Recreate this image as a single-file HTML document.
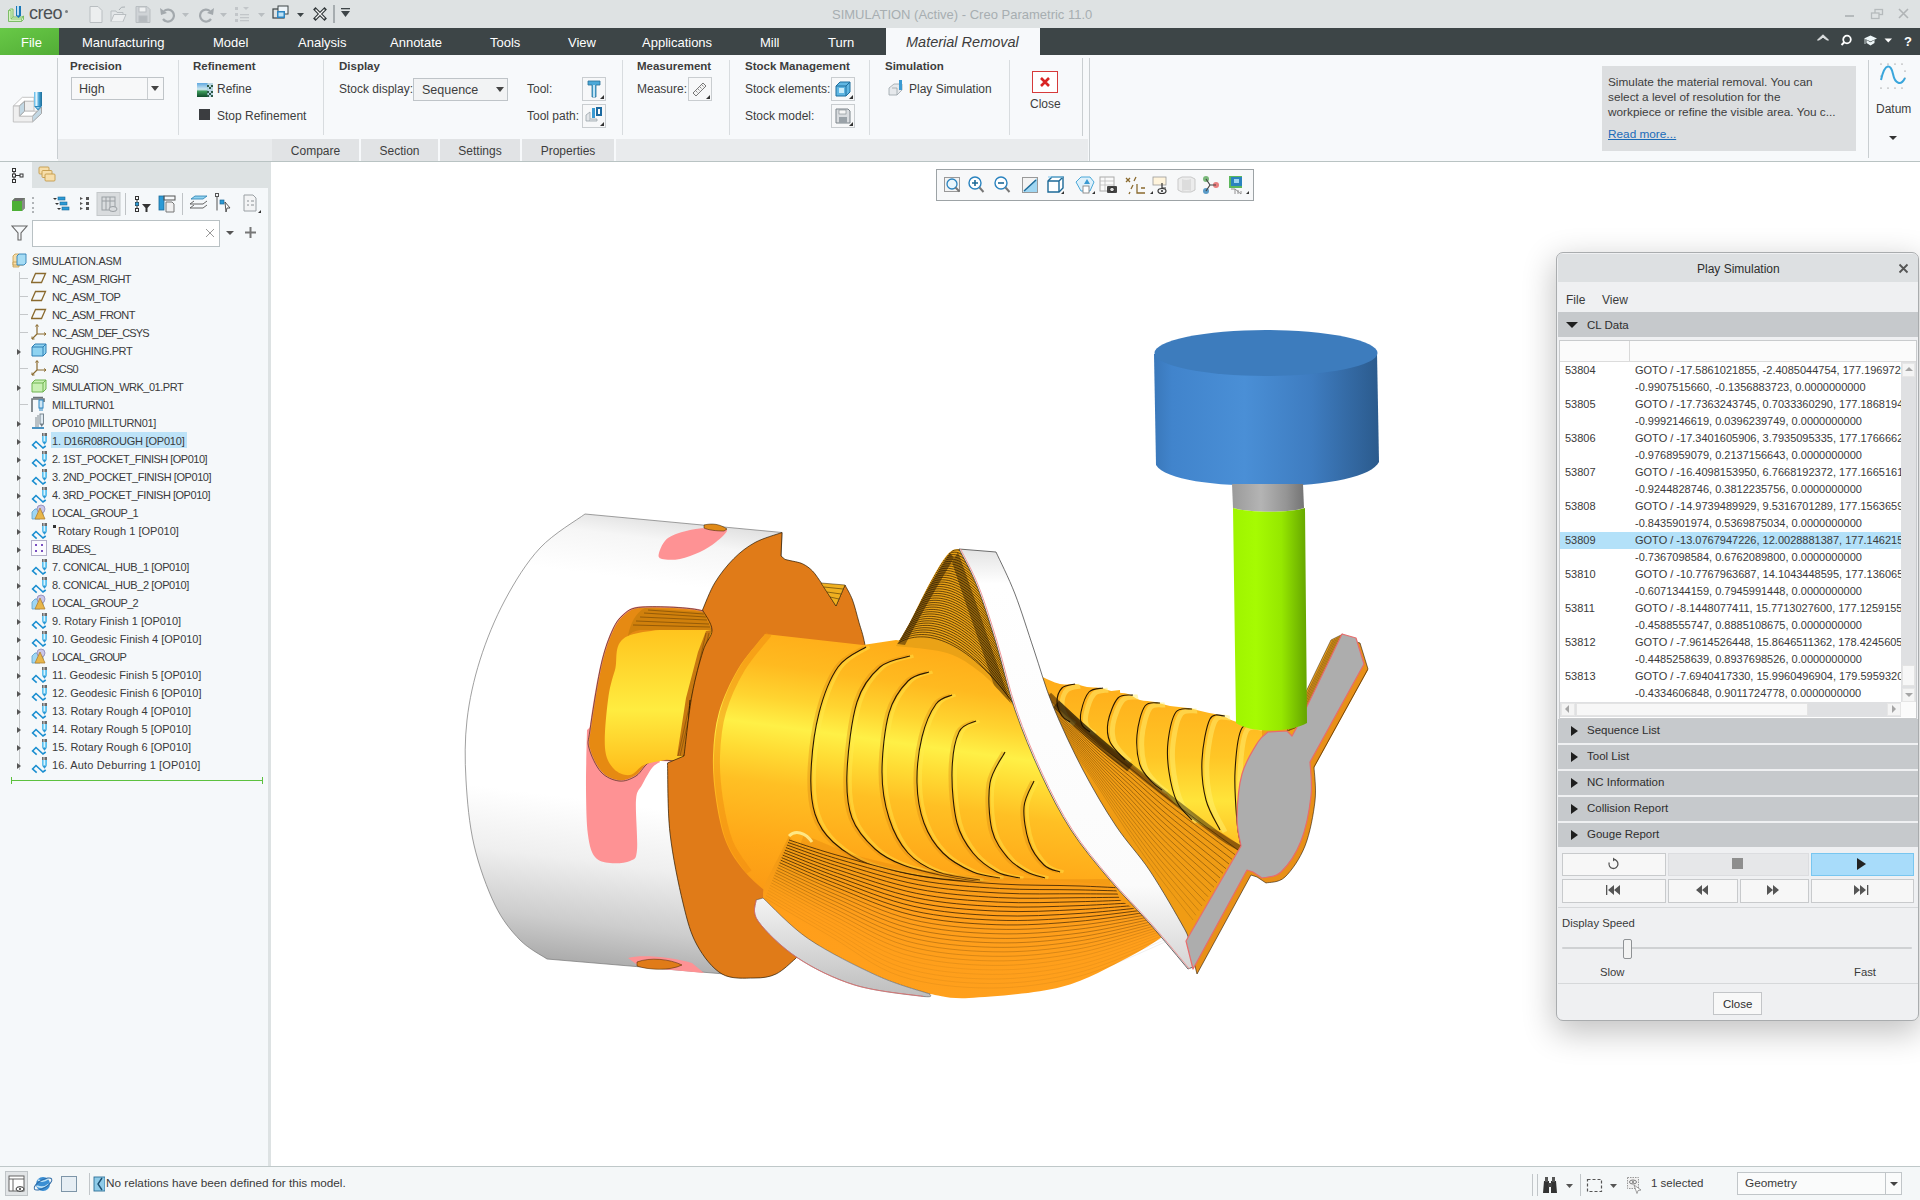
<!DOCTYPE html>
<html><head><meta charset="utf-8">
<style>
*{margin:0;padding:0;box-sizing:border-box}
html,body{width:1920px;height:1200px;overflow:hidden;background:#fff;font-family:"Liberation Sans",sans-serif;color:#3b3b3b}
.a{position:absolute}
.t{position:absolute;white-space:nowrap;line-height:1}
#title{left:0;top:0;width:1920px;height:28px;background:#dee2e3}
#tabs{left:0;top:28px;width:1920px;height:27px;background:#3d4547}
.tab{position:absolute;top:36px;color:#fff;font-size:13px;white-space:nowrap;line-height:1}
#ribbon{left:0;top:55px;width:1920px;height:107px;background:#f7f9fb;border-bottom:1px solid #b9c3c3}
.gl{position:absolute;top:61px;font-size:11.5px;font-weight:bold;color:#3d3d3d;white-space:nowrap;line-height:1}
.rl{position:absolute;font-size:12px;color:#3d3d3d;white-space:nowrap;line-height:1}
.sep{position:absolute;width:1px;background:#d8dcdf}
.ib{position:absolute;width:24px;height:24px;border:1px solid #c9cdd0;background:#f7f8f9}
.ib:after{content:"";position:absolute;right:1px;bottom:1px;border-left:4px solid transparent;border-bottom:4px solid #333}
.subtab{position:absolute;top:139px;height:22px;background:#e1e3e5;font-size:12px;color:#3d3d3d;text-align:center;line-height:24px;border-right:2px solid #f7f9fb}
#left{left:0;top:162px;width:268px;height:1004px;background:#f5f8fa}
#split{left:268px;top:162px;width:3px;height:1004px;background:#dde2e3}
.tr{position:absolute;font-size:11px;color:#3a3a3a;white-space:nowrap;line-height:1}
#status{left:0;top:1166px;width:1920px;height:34px;background:#f4f7f8;border-top:1px solid #bfc8c9}
#dlg{left:1556px;top:252px;width:363px;height:769px;background:#eff0f2;border:1px solid #a9acae;border-radius:7px;box-shadow:0 10px 32px 2px rgba(0,0,0,.24);overflow:hidden}
#dlg>div,#dlg>svg{margin-left:1px;margin-top:1px}
.dl{position:absolute;font-size:11px;color:#3a3a3a;white-space:nowrap;line-height:1}
.sh{position:absolute;left:2px;width:357px;height:24px;background:#c6c9cc}
.sh .tri{position:absolute;left:13px;top:7px;border-top:5px solid transparent;border-bottom:5px solid transparent;border-left:7px solid #1e1e1e}
.sh span{position:absolute;left:29px;top:6px;font-size:11.5px;color:#2e2e2e;white-space:nowrap;line-height:1}
.btn{position:absolute;background:#f7f7f7;border:1px solid #c5c7ca}
</style></head><body>

<!-- TITLE BAR -->
<div id="title" class="a"></div>
<div id="tabs" class="a"></div>
<div class="a" style="left:0;top:28px;width:59px;height:27px;background:linear-gradient(160deg,#68c947,#52ad36)"></div>
<div class="tab" style="left:21px">File</div>
<div class="tab" style="left:82px">Manufacturing</div>
<div class="tab" style="left:213px">Model</div>
<div class="tab" style="left:298px">Analysis</div>
<div class="tab" style="left:390px">Annotate</div>
<div class="tab" style="left:490px">Tools</div>
<div class="tab" style="left:568px">View</div>
<div class="tab" style="left:642px">Applications</div>
<div class="tab" style="left:760px">Mill</div>
<div class="tab" style="left:828px">Turn</div>
<div class="a" style="left:886px;top:28px;width:154px;height:28px;background:#f7f9fb"></div>
<div class="tab" style="left:906px;top:35px;color:#3d3d3d;font-style:italic;font-size:14.5px">Material Removal</div>
<div class="t" style="left:832px;top:8px;font-size:13px;color:#a7aeb1">SIMULATION (Active) - Creo Parametric 11.0</div>


<!-- title icons -->
<svg class="a" style="left:7px;top:5px" width="18" height="18" viewBox="0 0 18 18"><path d="M1.5 5.5 L3.5 4 L6 4 L6 12 L15 12 L16.5 11 L16.5 14.5 L14.5 16.5 L1.5 16.5Z" fill="#d6f2c4" stroke="#73b85a" stroke-width=".9"/><path d="M1.5 5.5 L4 5.5 L4 14 L14.5 14 L14.5 16.5 M4 14 L6 12 M14.5 14 L16.5 11" fill="none" stroke="#73b85a" stroke-width=".7"/><path d="M9 1 h5 v9.5 l-2.5 2.5 l-2.5 -2.5z" fill="#1877b8"/><path d="M10.2 1 h1.6 v9 l-.8 .8 l-.8 -.8z" fill="#e8f7ff"/></svg>
<div class="t" style="left:29px;top:4px;font-size:18px;color:#4d5154;letter-spacing:-0.5px">creo</div>
<div class="a" style="left:65px;top:10px;width:3px;height:3px;border-radius:50%;background:#7a7f82"></div>
<svg class="a" style="left:88px;top:5px" width="270" height="18" viewBox="0 0 270 18">
 <g fill="none" stroke="#b9bec1" stroke-width="1">
  <path d="M2 1.5h8l4 4v12h-12z" fill="#eceeef"/>
  <path d="M23 6h5l1 1.5h6v9h-12z" fill="#e3e6e8"/><path d="M23 16.5l3-7h12l-3 7" fill="#eceeef"/>
  <path d="M31 5 q2-4 6-3" stroke="#aab0b4"/>
  <path d="M48 1.5h11l3 3v13h-14z" fill="#cfd3d6"/><rect x="51" y="2" width="7" height="5" fill="#eef0f1"/><rect x="51" y="11" width="8" height="6" fill="#b5babe"/>
 </g>
 <path d="M76 6 a6 6 0 1 1 -1 8" fill="none" stroke="#a3a9ad" stroke-width="2.2"/><path d="M72 3 L73 10 L79 8Z" fill="#a3a9ad"/>
 <path d="M94 8l3.5 4 3.5-4z" fill="#b9bec1"/>
 <path d="M122 6 a6 6 0 1 0 1 8" fill="none" stroke="#a3a9ad" stroke-width="2.2"/><path d="M126 3 L125 10 L119 8Z" fill="#a3a9ad"/>
 <path d="M132 8l3.5 4 3.5-4z" fill="#b9bec1"/>
 <g fill="#c2c6c9"><rect x="147" y="2" width="3" height="3"/><rect x="147" y="8" width="3" height="3"/><rect x="147" y="14" width="3" height="3"/><rect x="152" y="9" width="9" height="1.3"/><rect x="152" y="12" width="9" height="1.3"/><rect x="152" y="15" width="9" height="1.3"/><path d="M155 2 l3 3 l3 -3z"/></g>
 <path d="M170 8l3.5 4 3.5-4z" fill="#b9bec1"/>
 <rect x="185" y="4" width="11" height="9" fill="none" stroke="#3d4447" stroke-width="1.2"/><rect x="190" y="1" width="10" height="8" fill="#eef4f8" stroke="#3d4447" stroke-width="1"/><rect x="189" y="6" width="8" height="7" fill="#2e86c2"/><rect x="190.5" y="7.5" width="5" height="4" fill="#bfe3f7"/>
 <path d="M209 8l3.5 4 3.5-4z" fill="#3d4447"/>
 <path d="M227.5 4.5 L236.5 13.5 M236.5 4.5 L227.5 13.5" stroke="#2f3537" stroke-width="3.4" stroke-linecap="square"/><path d="M227.5 4.5 L236.5 13.5 M236.5 4.5 L227.5 13.5" stroke="#f4f4f4" stroke-width="1.2"/>
 <rect x="245" y="0" width="2" height="19" fill="#a6acaf"/>
 <path d="M253 6h9l-4.5 6z" fill="#3d4447"/><rect x="253" y="3" width="9" height="1.3" fill="#3d4447"/>
</svg>
<!-- window controls -->
<div class="a" style="left:1845px;top:15px;width:9px;height:2px;background:#b5babc"></div>
<svg class="a" style="left:1870px;top:8px" width="14" height="12" viewBox="0 0 14 12"><rect x="5" y="1.5" width="7.5" height="5" fill="none" stroke="#b5babc" stroke-width="1.3"/><rect x="1.5" y="5" width="7.5" height="5.5" fill="#dee2e3" stroke="#b5babc" stroke-width="1.3"/></svg>
<svg class="a" style="left:1898px;top:8px" width="11" height="11" viewBox="0 0 11 11"><path d="M1 1L10 10M10 1L1 10" stroke="#b0b4b6" stroke-width="1.6"/></svg>
<!-- tab right icons -->
<svg class="a" style="left:1816px;top:33px" width="100" height="16" viewBox="0 0 100 16">
 <path d="M1.5 7 L7 1.8 L12.5 7 L11 7 L7 4.2 L3 7Z" fill="#dcdfe0" stroke="#dcdfe0" stroke-width="1"/>
 <circle cx="31" cy="6.5" r="3.8" fill="none" stroke="#fff" stroke-width="1.8"/><path d="M28.5 9 L25.5 12" stroke="#fff" stroke-width="2"/>
 <path d="M48 5.5 L54.5 2.5 L61 5.5 L54.5 8.5Z" fill="#eef6f8"/><path d="M50.5 7 v3 l4 2.5 l4 -2.5 v-3 l-4 2.2z" fill="#eef6f8"/><path d="M49 6v5" stroke="#eef6f8" stroke-width=".8"/>
 <path d="M68.5 5.5h7.5l-3.75 4z" fill="#fff"/>
 <text x="88" y="12.5" font-size="13" font-weight="bold" fill="#fff" font-family="Liberation Sans">?</text>
</svg>
<!-- RIBBON -->
<div id="ribbon" class="a"></div>

<!-- ribbon content -->
<div class="a" style="left:57px;top:58px;width:1px;height:101px;background:#c9ced1"></div>
<div class="a" style="left:58px;top:139px;width:1030px;height:22px;background:#e9ebed"></div>
<div class="subtab" style="left:272px;width:89px">Compare</div>
<div class="subtab" style="left:361px;width:79px">Section</div>
<div class="subtab" style="left:440px;width:82px">Settings</div>
<div class="subtab" style="left:522px;width:94px">Properties</div>
<!-- big left icon -->
<svg class="a" style="left:8px;top:86px" width="40" height="40" viewBox="0 0 40 40">
 <defs><linearGradient id="cut" x1="0" x2="1"><stop offset="0" stop-color="#4fb3e6"/><stop offset=".3" stop-color="#e8f7fe"/><stop offset=".6" stop-color="#48a6d8"/><stop offset="1" stop-color="#1c6d98"/></linearGradient></defs>
 <path d="M5.3 20 L14.3 11.3 L26 11.3 L26 15.3 L16.5 15.3 L11.3 20Z" fill="#fff" stroke="#bdbdbd" stroke-width=".9"/>
 <path d="M16.5 15.3 L26 15.3 L26 25.2 L16.5 25.2Z" fill="#eeeeee" stroke="#bdbdbd" stroke-width=".9"/>
 <path d="M11.3 30.3 L16.5 25.2 L29 25.2 L24.5 30.3Z" fill="#fff" stroke="#bdbdbd" stroke-width=".9"/>
 <path d="M11.3 20 L16.5 15.3 L16.5 25.2 L11.3 30.3Z" fill="#c3d8e4" stroke="#9e9e9e" stroke-width=".9"/>
 <path d="M24.5 30.3 L33.5 21 L33.5 27.5 L24.5 36Z" fill="#c3d8e4" stroke="#9e9e9e" stroke-width=".9"/>
 <path d="M5.3 20 L11.3 20 L11.3 30.3 L24.5 30.3 L24.5 36 L5.3 36Z" fill="#efefef" stroke="#bdbdbd" stroke-width=".9"/>
 <rect x="26" y="6" width="8" height="14" fill="url(#cut)"/>
 <path d="M26 20 L34 20 L30 24.5Z" fill="#2a86ba"/><path d="M28 21 L32 21 L30 23Z" fill="#8fd0ee"/>
</svg>
<div class="gl" style="left:70px">Precision</div>
<div class="a" style="left:71px;top:77px;width:93px;height:23px;border:1px solid #bfc4c8;background:#f7f8f9"></div>
<div class="a" style="left:147px;top:78px;width:1px;height:21px;background:#c9cdd0"></div>
<div class="a" style="left:151px;top:86px;border-left:4px solid transparent;border-right:4px solid transparent;border-top:5px solid #444"></div>
<div class="rl" style="left:79px;top:83px;font-size:12.5px">High</div>
<div class="sep" style="left:178px;top:60px;height:75px"></div>
<div class="gl" style="left:193px">Refinement</div>
<svg class="a" style="left:197px;top:83px" width="16" height="14" viewBox="0 0 16 14"><defs><linearGradient id="rf" x1="0" y1="0" x2="0" y2="1"><stop offset="0" stop-color="#5fa8e0"/><stop offset=".45" stop-color="#cfe8f0"/><stop offset=".6" stop-color="#3c9a5a"/><stop offset="1" stop-color="#0f4a2a"/></linearGradient></defs><rect width="11" height="14" fill="url(#rf)"/><rect x="10" y="0" width="6" height="14" fill="#9cc7d8" opacity=".7"/><path d="M10 2h2v2h-2zM12 4h2v2h-2zM14 2h2v2h-2zM10 8h2v2h-2zM12 10h2v2h-2zM14 8h2v2h-2zM10 12h2v2h-2zM14 12h2v2h-2z" fill="#2e5a48"/></svg>
<div class="rl" style="left:217px;top:83px">Refine</div>
<div class="a" style="left:199px;top:109px;width:11px;height:11px;background:#3b3d40"></div>
<div class="rl" style="left:217px;top:110px">Stop Refinement</div>
<div class="sep" style="left:323px;top:60px;height:75px"></div>
<div class="gl" style="left:339px">Display</div>
<div class="rl" style="left:339px;top:83px">Stock display:</div>
<div class="a" style="left:413px;top:78px;width:95px;height:23px;border:1px solid #bfc4c8;background:#f2f3f4"></div>
<div class="a" style="left:496px;top:87px;border-left:4px solid transparent;border-right:4px solid transparent;border-top:5px solid #444"></div>
<div class="rl" style="left:422px;top:84px;font-size:12.5px">Sequence</div>
<div class="rl" style="left:527px;top:83px">Tool:</div>
<div class="rl" style="left:527px;top:110px">Tool path:</div>
<div class="ib" style="left:582px;top:77px"></div>
<svg class="a" style="left:586px;top:80px" width="16" height="18" viewBox="0 0 16 18"><path d="M2 1h12v4h-4v12h-4v-12h-4z" fill="#4aa8d8" stroke="#2a6f98" stroke-width=".8"/><rect x="7" y="5" width="2" height="12" fill="#bfe4f6"/></svg>
<div class="ib" style="left:582px;top:104px"></div>
<svg class="a" style="left:585px;top:106px" width="18" height="18" viewBox="0 0 18 18"><path d="M1 9 L5 6 L5 15 L1 15Z" fill="#e3e6e9" stroke="#9aa3aa" stroke-width=".8"/><path d="M5 13 L12 13 L12 15 L5 15" fill="#e3e6e9" stroke="#9aa3aa" stroke-width=".8"/><rect x="7" y="2" width="3" height="10" fill="#3a9ad2"/><rect x="11" y="1" width="6" height="9" fill="#1d6aa0"/><rect x="13" y="3" width="2" height="5" fill="#fff"/></svg>
<div class="sep" style="left:622px;top:60px;height:75px"></div>
<div class="gl" style="left:637px">Measurement</div>
<div class="rl" style="left:637px;top:83px">Measure:</div>
<div class="ib" style="left:688px;top:77px"></div>
<svg class="a" style="left:691px;top:80px" width="18" height="18" viewBox="0 0 18 18"><path d="M2 13 L12 3 L15 6 L5 16 Z" fill="#f4f4f4" stroke="#777" stroke-width="1"/><path d="M5 11l1.5 1.5M7 9l1.5 1.5M9 7l1.5 1.5M11 5l1.5 1.5" stroke="#777" stroke-width=".8"/></svg>
<div class="sep" style="left:729px;top:60px;height:75px"></div>
<div class="gl" style="left:745px">Stock Management</div>
<div class="rl" style="left:745px;top:83px">Stock elements:</div>
<div class="rl" style="left:745px;top:110px">Stock model:</div>
<div class="ib" style="left:831px;top:77px"></div>
<svg class="a" style="left:834px;top:80px" width="18" height="18" viewBox="0 0 18 18"><path d="M2 6 L6 2 L16 2 L16 12 L12 16 L2 16Z" fill="#5fb6e2" stroke="#1e6e9e" stroke-width="1"/><path d="M2 6 L12 6 L12 16 M12 6 L16 2" fill="none" stroke="#1e6e9e" stroke-width="1"/><rect x="5" y="8" width="5" height="5" fill="#c8ecfa"/></svg>
<div class="ib" style="left:831px;top:104px"></div>
<svg class="a" style="left:834px;top:107px" width="18" height="18" viewBox="0 0 18 18"><path d="M2 2h12l2 2v12h-14z" fill="#d9dcdf" stroke="#7d858b" stroke-width="1"/><rect x="5" y="3" width="7" height="4" fill="#f5f5f5" stroke="#7d858b" stroke-width=".6"/><rect x="5" y="10" width="8" height="6" fill="#9aa2a8"/></svg>
<div class="sep" style="left:869px;top:60px;height:75px"></div>
<div class="gl" style="left:885px">Simulation</div>
<svg class="a" style="left:888px;top:79px" width="17" height="19" viewBox="0 0 17 19"><path d="M1 9 L6 5 L14 5 L14 11 L9 16 L1 16Z" fill="#e6e9ec" stroke="#9aa3aa" stroke-width=".8"/><path d="M4 9 L9 9 L9 16" fill="none" stroke="#9aa3aa" stroke-width=".8"/><rect x="11" y="1" width="3" height="10" fill="#3a9ad2"/></svg>
<div class="rl" style="left:909px;top:83px">Play Simulation</div>
<div class="sep" style="left:1009px;top:60px;height:75px"></div>
<div class="a" style="left:1032px;top:71px;width:26px;height:22px;border:1px solid #d63a3a;background:#fff"></div>
<svg class="a" style="left:1038px;top:75px" width="14" height="14" viewBox="0 0 14 14"><path d="M3 3 L11 11 M11 3 L3 11" stroke="#d92424" stroke-width="2.6"/></svg>
<div class="rl" style="left:1030px;top:98px">Close</div>
<div class="sep" style="left:1082px;top:58px;height:78px;background:#c9ced1"></div>
<div class="sep" style="left:1089px;top:58px;height:103px;background:#c9ced1"></div>
<!-- info box -->
<div class="a" style="left:1602px;top:66px;width:254px;height:85px;background:#dcdee0"></div>
<div class="rl" style="left:1608px;top:77px;font-size:11.8px">Simulate the material removal. You can</div>
<div class="rl" style="left:1608px;top:92px;font-size:11.8px">select a level of resolution for the</div>
<div class="rl" style="left:1608px;top:107px;font-size:11.8px">workpiece or refine the visible area. You c...</div>
<div class="rl" style="left:1608px;top:129px;font-size:11.8px;color:#1b6bb8;text-decoration:underline">Read more...</div>
<div class="sep" style="left:1868px;top:60px;height:98px;background:#c9ced1"></div>
<svg class="a" style="left:1879px;top:62px" width="28" height="28" viewBox="0 0 28 28"><g fill="#666"><circle cx="2" cy="2" r=".6"/><circle cx="9" cy="2" r=".6"/><circle cx="16" cy="2" r=".6"/><circle cx="23" cy="2" r=".6"/><circle cx="2" cy="26" r=".6"/><circle cx="9" cy="26" r=".6"/><circle cx="16" cy="26" r=".6"/><circle cx="23" cy="26" r=".6"/><circle cx="26" cy="9" r=".6"/><circle cx="26" cy="16" r=".6"/><circle cx="2" cy="14" r=".6"/></g><path d="M2 18 C6 0 12 2 14 12 C16 22 22 24 26 16" fill="none" stroke="#3aa6dc" stroke-width="2"/></svg>
<div class="rl" style="left:1876px;top:103px">Datum</div>
<div class="a" style="left:1889px;top:136px;border-left:4px solid transparent;border-right:4px solid transparent;border-top:4px solid #333"></div>

<!-- LEFT PANEL -->
<div id="left" class="a"></div><div id="split" class="a"></div>
<div class="a" style="left:32px;top:162px;width:236px;height:26px;background:#dde2e3"></div>
<svg class="a" style="left:11px;top:167px" width="14" height="16" viewBox="0 0 14 16"><g fill="none" stroke="#333" stroke-width="1"><rect x="1.5" y="1.5" width="3" height="3"/><rect x="1.5" y="7" width="3" height="3"/><rect x="1.5" y="12.5" width="3" height="3"/><rect x="9" y="7" width="3" height="3"/><path d="M3 4.5v2.5M3 10v2.5M4.5 8.5h4.5"/></g></svg>
<svg class="a" style="left:38px;top:166px" width="18" height="16" viewBox="0 0 18 16"><g fill="#f7deaa" stroke="#c39a4a" stroke-width=".9"><rect x="1" y="1" width="10" height="7" rx="1"/><rect x="4" y="4.5" width="10" height="7" rx="1"/><rect x="7" y="8" width="10" height="7" rx="1"/></g></svg>
<svg class="a" style="left:10px;top:192px" width="255" height="26" viewBox="0 0 255 26">
<path d="M2 9l3-3h10v10l-3 3H2z" fill="#4db035"/><path d="M2 9l3-3h10l-3 3z" fill="#6f6f6f"/><path d="M12 9l3-3v10l-3 3z" fill="#8a8a8a"/>
<g fill="#b0b4b7"><rect x="22" y="5" width="2" height="2"/><rect x="22" y="10" width="2" height="2"/><rect x="22" y="15" width="2" height="2"/><rect x="22" y="19" width="2" height="2"/></g>
<g fill="#2a9ad6" stroke="#1d6a98" stroke-width=".6"><rect x="48" y="5" width="7" height="3"/><rect x="50" y="10" width="7" height="3"/><rect x="52" y="15" width="7" height="3"/></g><path d="M43 6l2 2 2-2zM45 11l2 2 2-2zM47 16l2 2 2-2z" fill="#333"/>
<g fill="#555"><rect x="76" y="5" width="3" height="3"/><rect x="76" y="10" width="3" height="3"/><rect x="76" y="15" width="3" height="3"/><path d="M70 5l3 1.5-3 1.5zM70 10l3 1.5-3 1.5zM70 15l3 1.5-3 1.5z"/></g>
<rect x="87" y="0.5" width="23" height="23" fill="#d9dcde" stroke="#c4c8ca"/><g fill="none" stroke="#9a9fa3" stroke-width="1"><rect x="92" y="5" width="13" height="13"/><path d="M96 5v13M100 5v13M92 9h13"/></g><ellipse cx="103" cy="17" rx="4" ry="2.5" fill="#d9dcde" stroke="#9a9fa3"/>
<rect x="115" y="1" width="1" height="22" fill="#bfc3c6"/>
<g fill="none" stroke="#333" stroke-width="1"><rect x="125.5" y="4.5" width="3" height="3"/><rect x="125.5" y="10.5" width="3" height="3"/><rect x="125.5" y="16.5" width="3" height="3"/><path d="M127 7.5v3M127 13.5v3"/></g><rect x="125.5" y="10.5" width="3" height="3" fill="#2a9ad6"/><path d="M132 12h9l-3.5 4v4h-2v-4z" fill="#333"/>
<rect x="149" y="4" width="5" height="14" fill="#2a9ad6" stroke="#1d6a98" stroke-width=".8"/><rect x="154" y="4" width="11" height="4" fill="none" stroke="#555"/><path d="M156 10h6l2 2v8h-8z" fill="#f0f0f0" stroke="#777"/>
<rect x="172" y="1" width="1" height="22" fill="#bfc3c6"/>
<path d="M181 7l4-3h12l-4 3z" fill="#8fd3f1" stroke="#2a7fb0" stroke-width=".8"/><path d="M180 12l4-3M180 16l4-3M193 12l4-3M193 16l4-3M180 12h13M180 16h13" fill="none" stroke="#555" stroke-width=".9"/>
<rect x="205.5" y="1.5" width="3" height="3" fill="none" stroke="#555"/><path d="M207 4.5v14" stroke="#555"/><rect x="210" y="8" width="4" height="4" fill="#2a9ad6" stroke="#1d6a98" stroke-width=".7"/><path d="M215 10l5 6h-3l-1 4z" fill="#fff" stroke="#444" stroke-width=".9"/>
<path d="M234 3h9l3 3v13h-12z" fill="#f3f4f5" stroke="#9aa0a4"/><path d="M237 9h2M241 9h3M237 13h2M241 13h3" stroke="#8a9094"/><path d="M248 21l3-3v3z" fill="#333"/>
</svg>
<svg class="a" style="left:11px;top:225px" width="18" height="17" viewBox="0 0 18 17"><path d="M1 1h15l-6 7v7h-3v-7z" fill="none" stroke="#666" stroke-width="1.1"/></svg>
<div class="a" style="left:32px;top:220px;width:188px;height:27px;background:#fff;border:1px solid #b9c1c4"></div>
<svg class="a" style="left:205px;top:228px" width="10" height="10" viewBox="0 0 10 10"><path d="M1 1l8 8M9 1l-8 8" stroke="#999" stroke-width="1"/></svg>
<div class="a" style="left:226px;top:231px;border-left:4px solid transparent;border-right:4px solid transparent;border-top:4px solid #555"></div>
<svg class="a" style="left:244px;top:226px" width="13" height="13" viewBox="0 0 13 13"><path d="M6.5 1v11M1 6.5h11" stroke="#777" stroke-width="2"/></svg>
<div class="a" style="left:19px;top:272px;width:1px;height:498px;background:#c5c8ca"></div>
<svg class="a" style="left:12px;top:253px" width="15" height="15" viewBox="0 0 15 15"><path d="M1 3l2-2h4v13H1z" fill="#f7deaa" stroke="#c39a4a" stroke-width=".8"/><path d="M1 9h12l-2 3H1z" fill="#f7deaa" stroke="#c39a4a" stroke-width=".8"/><path d="M5 3l2-2h7v9l-2 2H5z" fill="#a6dcf4" stroke="#2f7fb4" stroke-width=".9"/></svg>
<div class="tr" style="left:32px;top:256px;letter-spacing:-0.28px">SIMULATION.ASM</div>
<div class="a" style="left:20px;top:278px;width:8px;height:1px;background:#c5c8ca"></div>
<svg class="a" style="left:31px;top:272px" width="16" height="12" viewBox="0 0 16 12"><path d="M4.5 1.5h10l-4 9h-10z" fill="none" stroke="#8a6a2e" stroke-width="1.3"/></svg>
<div class="tr" style="left:52px;top:274px;letter-spacing:-0.6px">NC_ASM_RIGHT</div>
<div class="a" style="left:20px;top:296px;width:8px;height:1px;background:#c5c8ca"></div>
<svg class="a" style="left:31px;top:290px" width="16" height="12" viewBox="0 0 16 12"><path d="M4.5 1.5h10l-4 9h-10z" fill="none" stroke="#8a6a2e" stroke-width="1.3"/></svg>
<div class="tr" style="left:52px;top:292px;letter-spacing:-0.61px">NC_ASM_TOP</div>
<div class="a" style="left:20px;top:314px;width:8px;height:1px;background:#c5c8ca"></div>
<svg class="a" style="left:31px;top:308px" width="16" height="12" viewBox="0 0 16 12"><path d="M4.5 1.5h10l-4 9h-10z" fill="none" stroke="#8a6a2e" stroke-width="1.3"/></svg>
<div class="tr" style="left:52px;top:310px;letter-spacing:-0.59px">NC_ASM_FRONT</div>
<div class="a" style="left:20px;top:332px;width:8px;height:1px;background:#c5c8ca"></div>
<svg class="a" style="left:31px;top:324px" width="16" height="16" viewBox="0 0 16 16"><path d="M6 1v9l9 0M6 10l-5 5" fill="none" stroke="#8a6a2e" stroke-width="1.2"/><path d="M4.5 2.5L6 0.5 7.5 2.5M13 8.5l2 1.5-2 1.5M1 12.5v2.5h2.5" fill="none" stroke="#8a6a2e" stroke-width="1"/></svg>
<div class="tr" style="left:52px;top:328px;letter-spacing:-0.89px">NC_ASM_DEF_CSYS</div>
<div class="a" style="left:17px;top:349px;border-top:3.5px solid transparent;border-bottom:3.5px solid transparent;border-left:4px solid #555"></div>
<svg class="a" style="left:31px;top:343px" width="16" height="14" viewBox="0 0 16 14"><path d="M1 4L4 1h11v9l-3 3H1z" fill="#8fd3f1" stroke="#2f7fb4" stroke-width="1"/><path d="M1 4h11v9M12 4l3-3" fill="none" stroke="#2f7fb4" stroke-width="1"/></svg>
<div class="tr" style="left:52px;top:346px;letter-spacing:-0.43px">ROUGHING.PRT</div>
<div class="a" style="left:20px;top:368px;width:8px;height:1px;background:#c5c8ca"></div>
<svg class="a" style="left:31px;top:360px" width="16" height="16" viewBox="0 0 16 16"><path d="M6 1v9l9 0M6 10l-5 5" fill="none" stroke="#8a6a2e" stroke-width="1.2"/><path d="M4.5 2.5L6 0.5 7.5 2.5M13 8.5l2 1.5-2 1.5M1 12.5v2.5h2.5" fill="none" stroke="#8a6a2e" stroke-width="1"/></svg>
<div class="tr" style="left:52px;top:364px;letter-spacing:-0.68px">ACS0</div>
<div class="a" style="left:17px;top:385px;border-top:3.5px solid transparent;border-bottom:3.5px solid transparent;border-left:4px solid #555"></div>
<svg class="a" style="left:31px;top:379px" width="16" height="14" viewBox="0 0 16 14"><path d="M1 4L4 1h11v9l-3 3H1z" fill="#c9f0b4" stroke="#6fb350" stroke-width="1"/><path d="M1 4h11v9M12 4l3-3" fill="none" stroke="#6fb350" stroke-width="1"/></svg>
<div class="tr" style="left:52px;top:382px;letter-spacing:-0.49px">SIMULATION_WRK_01.PRT</div>
<div class="a" style="left:20px;top:404px;width:8px;height:1px;background:#c5c8ca"></div>
<svg class="a" style="left:31px;top:396px" width="16" height="16" viewBox="0 0 16 16"><path d="M1 16V3h12v3" fill="none" stroke="#6b7378" stroke-width="1.6"/><path d="M2 1.5h10" stroke="#6b7378" stroke-width="1.5"/><rect x="8" y="4" width="4" height="8" fill="#cfe6f4" stroke="#2a83bf" stroke-width="1"/><path d="M9 12v3M11 12v3" stroke="#2a83bf" stroke-width="1"/></svg>
<div class="tr" style="left:52px;top:400px;letter-spacing:-0.42px">MILLTURN01</div>
<div class="a" style="left:17px;top:421px;border-top:3.5px solid transparent;border-bottom:3.5px solid transparent;border-left:4px solid #555"></div>
<svg class="a" style="left:31px;top:413px" width="18" height="16" viewBox="0 0 18 16"><path d="M1 15h12" stroke="#1e78b4" stroke-width="1.6"/><rect x="9" y="1" width="3.5" height="10" fill="#dfeaf2" stroke="#6f7c85" stroke-width=".9"/><path d="M5 4v10M7 2v12" stroke="#7f8a91" stroke-width="1"/><path d="M9 11l1.7 3 1.8-3" fill="#6f7c85"/></svg>
<div class="tr" style="left:52px;top:418px;letter-spacing:-0.32px">OP010 [MILLTURN01]</div>
<div class="a" style="left:17px;top:439px;border-top:3.5px solid transparent;border-bottom:3.5px solid transparent;border-left:4px solid #555"></div>
<svg class="a" style="left:31px;top:432px" width="18" height="18" viewBox="0 0 18 18"><path d="M5.7 16.7 L1.6 13 L5 9.5 L12 16 L14.7 14" fill="none" stroke="#1a8ed0" stroke-width="1.6" stroke-linejoin="miter"/><rect x="11" y="4" width="5" height="5.5" fill="#5cc0ee"/><rect x="12.6" y="4" width="1.6" height="5.5" fill="#d8f4ff"/><rect x="11" y="1" width="5" height="3" fill="#6b6b6b"/><rect x="12.5" y="1" width="1" height="3" fill="#ddd"/><path d="M11 9.5 L16 9.5 L13.5 12.7Z" fill="#2a9ad6"/></svg>
<div class="a" style="left:51px;top:432px;width:136px;height:16px;background:#bde3f8"></div>
<div class="tr" style="left:52px;top:436px;letter-spacing:-0.2px">1. D16R08ROUGH [OP010]</div>
<div class="a" style="left:17px;top:457px;border-top:3.5px solid transparent;border-bottom:3.5px solid transparent;border-left:4px solid #555"></div>
<svg class="a" style="left:31px;top:450px" width="18" height="18" viewBox="0 0 18 18"><path d="M5.7 16.7 L1.6 13 L5 9.5 L12 16 L14.7 14" fill="none" stroke="#1a8ed0" stroke-width="1.6" stroke-linejoin="miter"/><rect x="11" y="4" width="5" height="5.5" fill="#5cc0ee"/><rect x="12.6" y="4" width="1.6" height="5.5" fill="#d8f4ff"/><rect x="11" y="1" width="5" height="3" fill="#6b6b6b"/><rect x="12.5" y="1" width="1" height="3" fill="#ddd"/><path d="M11 9.5 L16 9.5 L13.5 12.7Z" fill="#2a9ad6"/></svg>
<div class="tr" style="left:52px;top:454px;letter-spacing:-0.51px">2. 1ST_POCKET_FINISH [OP010]</div>
<div class="a" style="left:17px;top:475px;border-top:3.5px solid transparent;border-bottom:3.5px solid transparent;border-left:4px solid #555"></div>
<svg class="a" style="left:31px;top:468px" width="18" height="18" viewBox="0 0 18 18"><path d="M5.7 16.7 L1.6 13 L5 9.5 L12 16 L14.7 14" fill="none" stroke="#1a8ed0" stroke-width="1.6" stroke-linejoin="miter"/><rect x="11" y="4" width="5" height="5.5" fill="#5cc0ee"/><rect x="12.6" y="4" width="1.6" height="5.5" fill="#d8f4ff"/><rect x="11" y="1" width="5" height="3" fill="#6b6b6b"/><rect x="12.5" y="1" width="1" height="3" fill="#ddd"/><path d="M11 9.5 L16 9.5 L13.5 12.7Z" fill="#2a9ad6"/></svg>
<div class="tr" style="left:52px;top:472px;letter-spacing:-0.43px">3. 2ND_POCKET_FINISH [OP010]</div>
<div class="a" style="left:17px;top:493px;border-top:3.5px solid transparent;border-bottom:3.5px solid transparent;border-left:4px solid #555"></div>
<svg class="a" style="left:31px;top:486px" width="18" height="18" viewBox="0 0 18 18"><path d="M5.7 16.7 L1.6 13 L5 9.5 L12 16 L14.7 14" fill="none" stroke="#1a8ed0" stroke-width="1.6" stroke-linejoin="miter"/><rect x="11" y="4" width="5" height="5.5" fill="#5cc0ee"/><rect x="12.6" y="4" width="1.6" height="5.5" fill="#d8f4ff"/><rect x="11" y="1" width="5" height="3" fill="#6b6b6b"/><rect x="12.5" y="1" width="1" height="3" fill="#ddd"/><path d="M11 9.5 L16 9.5 L13.5 12.7Z" fill="#2a9ad6"/></svg>
<div class="tr" style="left:52px;top:490px;letter-spacing:-0.47px">4. 3RD_POCKET_FINISH [OP010]</div>
<div class="a" style="left:17px;top:511px;border-top:3.5px solid transparent;border-bottom:3.5px solid transparent;border-left:4px solid #555"></div>
<svg class="a" style="left:31px;top:504px" width="18" height="16" viewBox="0 0 18 16"><path d="M1 8l3-3h8v7l-3 3h-8z" fill="#9fd6f2" stroke="#5a9fc8" stroke-width=".8"/><circle cx="10" cy="5" r="4" fill="#c9c6e8" stroke="#8a86b8" stroke-width=".8"/><path d="M9 4 L14 15 L4 15Z" fill="#e8b64a" stroke="#b08030" stroke-width=".8"/></svg>
<div class="tr" style="left:52px;top:508px;letter-spacing:-0.67px">LOCAL_GROUP_1</div>
<div class="a" style="left:17px;top:529px;border-top:3.5px solid transparent;border-bottom:3.5px solid transparent;border-left:4px solid #555"></div>
<svg class="a" style="left:31px;top:522px" width="18" height="18" viewBox="0 0 18 18"><path d="M5.7 16.7 L1.6 13 L5 9.5 L12 16 L14.7 14" fill="none" stroke="#1a8ed0" stroke-width="1.6" stroke-linejoin="miter"/><rect x="11" y="4" width="5" height="5.5" fill="#5cc0ee"/><rect x="12.6" y="4" width="1.6" height="5.5" fill="#d8f4ff"/><rect x="11" y="1" width="5" height="3" fill="#6b6b6b"/><rect x="12.5" y="1" width="1" height="3" fill="#ddd"/><path d="M11 9.5 L16 9.5 L13.5 12.7Z" fill="#2a9ad6"/></svg>
<div class="a" style="left:53px;top:525px;width:3px;height:3px;background:#333"></div>
<div class="tr" style="left:58px;top:526px;letter-spacing:0.02px">Rotary Rough 1 [OP010]</div>
<div class="a" style="left:17px;top:547px;border-top:3.5px solid transparent;border-bottom:3.5px solid transparent;border-left:4px solid #555"></div>
<svg class="a" style="left:31px;top:540px" width="16" height="16" viewBox="0 0 16 16"><rect x=".5" y=".5" width="15" height="15" fill="#fbfbfe" stroke="#b3b0c9"/><g fill="#7a4fc2"><rect x="4" y="4" width="2" height="2"/><rect x="10" y="4" width="2" height="2"/><rect x="4" y="10" width="2" height="2"/><rect x="10" y="10" width="2" height="2"/></g></svg>
<div class="tr" style="left:52px;top:544px;letter-spacing:-0.93px">BLADES_</div>
<div class="a" style="left:17px;top:565px;border-top:3.5px solid transparent;border-bottom:3.5px solid transparent;border-left:4px solid #555"></div>
<svg class="a" style="left:31px;top:558px" width="18" height="18" viewBox="0 0 18 18"><path d="M5.7 16.7 L1.6 13 L5 9.5 L12 16 L14.7 14" fill="none" stroke="#1a8ed0" stroke-width="1.6" stroke-linejoin="miter"/><rect x="11" y="4" width="5" height="5.5" fill="#5cc0ee"/><rect x="12.6" y="4" width="1.6" height="5.5" fill="#d8f4ff"/><rect x="11" y="1" width="5" height="3" fill="#6b6b6b"/><rect x="12.5" y="1" width="1" height="3" fill="#ddd"/><path d="M11 9.5 L16 9.5 L13.5 12.7Z" fill="#2a9ad6"/></svg>
<div class="tr" style="left:52px;top:562px;letter-spacing:-0.38px">7. CONICAL_HUB_1 [OP010]</div>
<div class="a" style="left:17px;top:583px;border-top:3.5px solid transparent;border-bottom:3.5px solid transparent;border-left:4px solid #555"></div>
<svg class="a" style="left:31px;top:576px" width="18" height="18" viewBox="0 0 18 18"><path d="M5.7 16.7 L1.6 13 L5 9.5 L12 16 L14.7 14" fill="none" stroke="#1a8ed0" stroke-width="1.6" stroke-linejoin="miter"/><rect x="11" y="4" width="5" height="5.5" fill="#5cc0ee"/><rect x="12.6" y="4" width="1.6" height="5.5" fill="#d8f4ff"/><rect x="11" y="1" width="5" height="3" fill="#6b6b6b"/><rect x="12.5" y="1" width="1" height="3" fill="#ddd"/><path d="M11 9.5 L16 9.5 L13.5 12.7Z" fill="#2a9ad6"/></svg>
<div class="tr" style="left:52px;top:580px;letter-spacing:-0.38px">8. CONICAL_HUB_2 [OP010]</div>
<div class="a" style="left:17px;top:601px;border-top:3.5px solid transparent;border-bottom:3.5px solid transparent;border-left:4px solid #555"></div>
<svg class="a" style="left:31px;top:594px" width="18" height="16" viewBox="0 0 18 16"><path d="M1 8l3-3h8v7l-3 3h-8z" fill="#9fd6f2" stroke="#5a9fc8" stroke-width=".8"/><circle cx="10" cy="5" r="4" fill="#c9c6e8" stroke="#8a86b8" stroke-width=".8"/><path d="M9 4 L14 15 L4 15Z" fill="#e8b64a" stroke="#b08030" stroke-width=".8"/></svg>
<div class="tr" style="left:52px;top:598px;letter-spacing:-0.67px">LOCAL_GROUP_2</div>
<div class="a" style="left:17px;top:619px;border-top:3.5px solid transparent;border-bottom:3.5px solid transparent;border-left:4px solid #555"></div>
<svg class="a" style="left:31px;top:612px" width="18" height="18" viewBox="0 0 18 18"><path d="M5.7 16.7 L1.6 13 L5 9.5 L12 16 L14.7 14" fill="none" stroke="#1a8ed0" stroke-width="1.6" stroke-linejoin="miter"/><rect x="11" y="4" width="5" height="5.5" fill="#5cc0ee"/><rect x="12.6" y="4" width="1.6" height="5.5" fill="#d8f4ff"/><rect x="11" y="1" width="5" height="3" fill="#6b6b6b"/><rect x="12.5" y="1" width="1" height="3" fill="#ddd"/><path d="M11 9.5 L16 9.5 L13.5 12.7Z" fill="#2a9ad6"/></svg>
<div class="tr" style="left:52px;top:616px;letter-spacing:-0.02px">9. Rotary Finish 1 [OP010]</div>
<div class="a" style="left:17px;top:637px;border-top:3.5px solid transparent;border-bottom:3.5px solid transparent;border-left:4px solid #555"></div>
<svg class="a" style="left:31px;top:630px" width="18" height="18" viewBox="0 0 18 18"><path d="M5.7 16.7 L1.6 13 L5 9.5 L12 16 L14.7 14" fill="none" stroke="#1a8ed0" stroke-width="1.6" stroke-linejoin="miter"/><rect x="11" y="4" width="5" height="5.5" fill="#5cc0ee"/><rect x="12.6" y="4" width="1.6" height="5.5" fill="#d8f4ff"/><rect x="11" y="1" width="5" height="3" fill="#6b6b6b"/><rect x="12.5" y="1" width="1" height="3" fill="#ddd"/><path d="M11 9.5 L16 9.5 L13.5 12.7Z" fill="#2a9ad6"/></svg>
<div class="tr" style="left:52px;top:634px;letter-spacing:-0.01px">10. Geodesic Finish 4 [OP010]</div>
<div class="a" style="left:17px;top:655px;border-top:3.5px solid transparent;border-bottom:3.5px solid transparent;border-left:4px solid #555"></div>
<svg class="a" style="left:31px;top:648px" width="18" height="16" viewBox="0 0 18 16"><path d="M1 8l3-3h8v7l-3 3h-8z" fill="#9fd6f2" stroke="#5a9fc8" stroke-width=".8"/><circle cx="10" cy="5" r="4" fill="#c9c6e8" stroke="#8a86b8" stroke-width=".8"/><path d="M9 4 L14 15 L4 15Z" fill="#e8b64a" stroke="#b08030" stroke-width=".8"/></svg>
<div class="tr" style="left:52px;top:652px;letter-spacing:-0.78px">LOCAL_GROUP</div>
<div class="a" style="left:17px;top:673px;border-top:3.5px solid transparent;border-bottom:3.5px solid transparent;border-left:4px solid #555"></div>
<svg class="a" style="left:31px;top:666px" width="18" height="18" viewBox="0 0 18 18"><path d="M5.7 16.7 L1.6 13 L5 9.5 L12 16 L14.7 14" fill="none" stroke="#1a8ed0" stroke-width="1.6" stroke-linejoin="miter"/><rect x="11" y="4" width="5" height="5.5" fill="#5cc0ee"/><rect x="12.6" y="4" width="1.6" height="5.5" fill="#d8f4ff"/><rect x="11" y="1" width="5" height="3" fill="#6b6b6b"/><rect x="12.5" y="1" width="1" height="3" fill="#ddd"/><path d="M11 9.5 L16 9.5 L13.5 12.7Z" fill="#2a9ad6"/></svg>
<div class="tr" style="left:52px;top:670px;letter-spacing:0.01px">11. Geodesic Finish 5 [OP010]</div>
<div class="a" style="left:17px;top:691px;border-top:3.5px solid transparent;border-bottom:3.5px solid transparent;border-left:4px solid #555"></div>
<svg class="a" style="left:31px;top:684px" width="18" height="18" viewBox="0 0 18 18"><path d="M5.7 16.7 L1.6 13 L5 9.5 L12 16 L14.7 14" fill="none" stroke="#1a8ed0" stroke-width="1.6" stroke-linejoin="miter"/><rect x="11" y="4" width="5" height="5.5" fill="#5cc0ee"/><rect x="12.6" y="4" width="1.6" height="5.5" fill="#d8f4ff"/><rect x="11" y="1" width="5" height="3" fill="#6b6b6b"/><rect x="12.5" y="1" width="1" height="3" fill="#ddd"/><path d="M11 9.5 L16 9.5 L13.5 12.7Z" fill="#2a9ad6"/></svg>
<div class="tr" style="left:52px;top:688px;letter-spacing:-0.01px">12. Geodesic Finish 6 [OP010]</div>
<div class="a" style="left:17px;top:709px;border-top:3.5px solid transparent;border-bottom:3.5px solid transparent;border-left:4px solid #555"></div>
<svg class="a" style="left:31px;top:702px" width="18" height="18" viewBox="0 0 18 18"><path d="M5.7 16.7 L1.6 13 L5 9.5 L12 16 L14.7 14" fill="none" stroke="#1a8ed0" stroke-width="1.6" stroke-linejoin="miter"/><rect x="11" y="4" width="5" height="5.5" fill="#5cc0ee"/><rect x="12.6" y="4" width="1.6" height="5.5" fill="#d8f4ff"/><rect x="11" y="1" width="5" height="3" fill="#6b6b6b"/><rect x="12.5" y="1" width="1" height="3" fill="#ddd"/><path d="M11 9.5 L16 9.5 L13.5 12.7Z" fill="#2a9ad6"/></svg>
<div class="tr" style="left:52px;top:706px;letter-spacing:0.01px">13. Rotary Rough 4 [OP010]</div>
<div class="a" style="left:17px;top:727px;border-top:3.5px solid transparent;border-bottom:3.5px solid transparent;border-left:4px solid #555"></div>
<svg class="a" style="left:31px;top:720px" width="18" height="18" viewBox="0 0 18 18"><path d="M5.7 16.7 L1.6 13 L5 9.5 L12 16 L14.7 14" fill="none" stroke="#1a8ed0" stroke-width="1.6" stroke-linejoin="miter"/><rect x="11" y="4" width="5" height="5.5" fill="#5cc0ee"/><rect x="12.6" y="4" width="1.6" height="5.5" fill="#d8f4ff"/><rect x="11" y="1" width="5" height="3" fill="#6b6b6b"/><rect x="12.5" y="1" width="1" height="3" fill="#ddd"/><path d="M11 9.5 L16 9.5 L13.5 12.7Z" fill="#2a9ad6"/></svg>
<div class="tr" style="left:52px;top:724px;letter-spacing:0.01px">14. Rotary Rough 5 [OP010]</div>
<div class="a" style="left:17px;top:745px;border-top:3.5px solid transparent;border-bottom:3.5px solid transparent;border-left:4px solid #555"></div>
<svg class="a" style="left:31px;top:738px" width="18" height="18" viewBox="0 0 18 18"><path d="M5.7 16.7 L1.6 13 L5 9.5 L12 16 L14.7 14" fill="none" stroke="#1a8ed0" stroke-width="1.6" stroke-linejoin="miter"/><rect x="11" y="4" width="5" height="5.5" fill="#5cc0ee"/><rect x="12.6" y="4" width="1.6" height="5.5" fill="#d8f4ff"/><rect x="11" y="1" width="5" height="3" fill="#6b6b6b"/><rect x="12.5" y="1" width="1" height="3" fill="#ddd"/><path d="M11 9.5 L16 9.5 L13.5 12.7Z" fill="#2a9ad6"/></svg>
<div class="tr" style="left:52px;top:742px;letter-spacing:0.01px">15. Rotary Rough 6 [OP010]</div>
<div class="a" style="left:17px;top:763px;border-top:3.5px solid transparent;border-bottom:3.5px solid transparent;border-left:4px solid #555"></div>
<svg class="a" style="left:31px;top:756px" width="18" height="18" viewBox="0 0 18 18"><path d="M5.7 16.7 L1.6 13 L5 9.5 L12 16 L14.7 14" fill="none" stroke="#1a8ed0" stroke-width="1.6" stroke-linejoin="miter"/><rect x="11" y="4" width="5" height="5.5" fill="#5cc0ee"/><rect x="12.6" y="4" width="1.6" height="5.5" fill="#d8f4ff"/><rect x="11" y="1" width="5" height="3" fill="#6b6b6b"/><rect x="12.5" y="1" width="1" height="3" fill="#ddd"/><path d="M11 9.5 L16 9.5 L13.5 12.7Z" fill="#2a9ad6"/></svg>
<div class="tr" style="left:52px;top:760px;letter-spacing:0.15px">16. Auto Deburring 1 [OP010]</div>
<div class="a" style="left:12px;top:780px;width:250px;height:1px;background:#5cc13e"></div>
<div class="a" style="left:11px;top:777px;width:1px;height:7px;background:#5cc13e"></div><div class="a" style="left:262px;top:777px;width:1px;height:7px;background:#5cc13e"></div>
<!-- STATUS BAR -->
<div id="status" class="a"></div>
<svg class="a" style="left:5px;top:1171px" width="100" height="26" viewBox="0 0 100 26">
<rect x=".5" y=".5" width="22" height="24" fill="#e1e4e6" stroke="#bfc4c7"/><rect x="4" y="5" width="15" height="15" fill="#fff" stroke="#555" stroke-width=".9"/><path d="M4 8h15M8 8v12" stroke="#555" stroke-width=".9"/><ellipse cx="15" cy="18" rx="4" ry="2.3" fill="#fff" stroke="#333"/><circle cx="15" cy="18" r="1" fill="#333"/>
<circle cx="38" cy="13" r="7" fill="#3b8fd4"/><path d="M33 9 q5 3 10 -1 M32 15 q6 3 12 -2" stroke="#bfe3f7" stroke-width="1.5" fill="none"/><ellipse cx="38" cy="13" rx="10" ry="4" fill="none" stroke="#2d6aa5" stroke-width="1" transform="rotate(-30 38 13)"/>
<rect x="56.5" y="5.5" width="15" height="15" fill="#e6eef4" stroke="#7d95a8"/>
<rect x="84" y="2" width="1" height="22" fill="#c1c6c9"/>
<rect x="89" y="6" width="11" height="14" fill="#8fcbe8" stroke="#2a6f98" stroke-width=".9"/><path d="M97 7l-4 6 4 6" fill="none" stroke="#1d4f70" stroke-width="1.4"/>
</svg>
<div class="t" style="left:106px;top:1177px;font-size:11.75px;color:#3a3a3a">No relations have been defined for this model.</div>
<svg class="a" style="left:1530px;top:1171px" width="120" height="26" viewBox="0 0 120 26">
<rect x="2" y="3" width="1" height="22" fill="#c1c6c9"/><rect x="7" y="3" width="1" height="22" fill="#c1c6c9"/>
<path d="M14 10h5v12h-6zM21 10h5l1 12h-6z" fill="#333"/><rect x="15" y="6" width="3" height="5" fill="#555"/><rect x="22" y="6" width="3" height="5" fill="#555"/><rect x="18" y="12" width="4" height="4" fill="#444"/>
<path d="M36 13h7l-3.5 4z" fill="#555"/>
<rect x="50" y="3" width="1" height="22" fill="#c1c6c9"/>
<rect x="57.5" y="8.5" width="14" height="12" fill="none" stroke="#555" stroke-width="1.2" stroke-dasharray="3 2"/>
<path d="M80 13h7l-3.5 4z" fill="#555"/>
<rect x="97.5" y="6.5" width="11" height="11" fill="#f0f0f0" stroke="#999" stroke-dasharray="1.5 1"/><ellipse cx="103" cy="11" rx="3.5" ry="2" fill="none" stroke="#777"/><circle cx="103" cy="11" r="1" fill="#777"/><path d="M104 14l7 5-3 .5-1 3z" fill="#fff" stroke="#888" stroke-width=".8"/>
</svg>
<div class="t" style="left:1651px;top:1178px;font-size:11.5px;color:#3a3a3a">1 selected</div>
<div class="a" style="left:1737px;top:1172px;width:165px;height:23px;background:#fafbfb;border:1px solid #c1c6c9"></div>
<div class="a" style="left:1885px;top:1173px;width:1px;height:21px;background:#c1c6c9"></div>
<div class="a" style="left:1890px;top:1182px;border-left:4px solid transparent;border-right:4px solid transparent;border-top:4px solid #444"></div>
<div class="t" style="left:1745px;top:1178px;font-size:11.8px;color:#3a3a3a">Geometry</div>
<!--MODEL--><svg class="a" style="left:0;top:0" width="1920" height="1200" viewBox="0 0 1920 1200">
<defs>
 <linearGradient id="gWhiteCyl" x1="640" y1="514" x2="580" y2="978" gradientUnits="userSpaceOnUse">
  <stop offset="0" stop-color="#e0e0e0"/><stop offset=".05" stop-color="#f6f6f6"/><stop offset=".14" stop-color="#ffffff"/><stop offset=".62" stop-color="#ffffff"/><stop offset=".75" stop-color="#efefef"/><stop offset=".88" stop-color="#cdcdcd"/><stop offset=".97" stop-color="#ababab"/><stop offset="1" stop-color="#a8a8a8"/>
 </linearGradient>
 <linearGradient id="gHub" x1="850" y1="634" x2="813" y2="905" gradientUnits="userSpaceOnUse">
  <stop offset="0" stop-color="#ffac18"/><stop offset=".15" stop-color="#ffba20"/><stop offset=".27" stop-color="#ffd430"/><stop offset=".37" stop-color="#fff046"/><stop offset=".46" stop-color="#ffdc34"/><stop offset=".58" stop-color="#ffc024"/><stop offset=".8" stop-color="#ffa818"/><stop offset="1" stop-color="#fa9814"/>
 </linearGradient>
 <linearGradient id="gSlot" x1="0" y1="630" x2="0" y2="775" gradientUnits="userSpaceOnUse">
  <stop offset="0" stop-color="#ffc41e"/><stop offset=".55" stop-color="#ffec40"/><stop offset="1" stop-color="#ffbc1a"/>
 </linearGradient>
 <linearGradient id="gBlue" x1="1154" y1="0" x2="1380" y2="0" gradientUnits="userSpaceOnUse">
  <stop offset="0" stop-color="#3a78ba"/><stop offset=".08" stop-color="#4184cc"/><stop offset=".4" stop-color="#4a8fd6"/><stop offset=".7" stop-color="#3e7cc0"/><stop offset="1" stop-color="#2b5a8c"/>
 </linearGradient>
 <linearGradient id="gGray" x1="1232" y1="0" x2="1304" y2="0" gradientUnits="userSpaceOnUse">
  <stop offset="0" stop-color="#9a9a9a"/><stop offset=".4" stop-color="#b4b4b4"/><stop offset=".75" stop-color="#959595"/><stop offset="1" stop-color="#747474"/>
 </linearGradient>
 <linearGradient id="gGreen" x1="1234" y1="0" x2="1307" y2="0" gradientUnits="userSpaceOnUse">
  <stop offset="0" stop-color="#9ff400"/><stop offset=".3" stop-color="#a6fb02"/><stop offset=".65" stop-color="#96e800"/><stop offset="1" stop-color="#64a400"/>
 </linearGradient>
 <linearGradient id="gSweep" x1="0" y1="840" x2="0" y2="1000" gradientUnits="userSpaceOnUse">
  <stop offset="0" stop-color="#f09a12"/><stop offset=".45" stop-color="#ff9e1a"/><stop offset="1" stop-color="#ffa01c"/>
 </linearGradient>
 <linearGradient id="gWB" x1="0" y1="897" x2="0" y2="1000" gradientUnits="userSpaceOnUse">
  <stop offset="0" stop-color="#f4f4f4"/><stop offset="1" stop-color="#bcbcbc"/>
 </linearGradient>
 <linearGradient id="gBladeW" x1="0" y1="550" x2="0" y2="970" gradientUnits="userSpaceOnUse">
  <stop offset="0" stop-color="#e4e4e4"/><stop offset=".08" stop-color="#ffffff"/><stop offset=".8" stop-color="#fbfbfb"/><stop offset="1" stop-color="#d4d4d4"/>
 </linearGradient>
 <linearGradient id="gRight" x1="0" y1="680" x2="0" y2="900" gradientUnits="userSpaceOnUse">
  <stop offset="0" stop-color="#ffac1a"/><stop offset=".35" stop-color="#ffc626"/><stop offset=".55" stop-color="#ffe43a"/><stop offset=".8" stop-color="#ffb81e"/><stop offset="1" stop-color="#f59a12"/>
 </linearGradient>
</defs>

<path d="M585.0 514.0 C577.5 519.7 553.3 533.7 540.0 548.0 C526.7 562.3 515.0 581.3 505.0 600.0 C495.0 618.7 486.3 640.0 480.0 660.0 C473.7 680.0 469.3 700.0 467.0 720.0 C464.7 740.0 464.8 759.2 466.0 780.0 C467.2 800.8 469.2 824.2 474.0 845.0 C478.8 865.8 487.3 889.2 495.0 905.0 C502.7 920.8 511.3 931.0 520.0 940.0 C528.7 949.0 542.5 955.8 547.0 959.0 L760.0 977.0 L781.0 560.0 L782.0 532.5 Z" fill="url(#gWhiteCyl)" stroke="#777" stroke-width=".7"/>
<path d="M659.0 553.0 C660.0 549.5 662.8 541.8 668.0 538.0 C673.2 534.2 682.7 531.7 690.0 530.0 C697.3 528.3 705.8 528.0 712.0 528.0 C718.2 528.0 726.3 527.7 727.0 530.0 C727.7 532.3 720.5 538.3 716.0 542.0 C711.5 545.7 706.0 549.2 700.0 552.0 C694.0 554.8 686.3 557.8 680.0 559.0 C673.7 560.2 665.5 560.0 662.0 559.0 C658.5 558.0 658.0 556.5 659.0 553.0 Z" fill="#fe9294"/>
<path d="M704 525 C712 523 720 524 727 529 L724 531 C716 531 708 530 704 528Z" fill="#e08a18" stroke="#2a1800" stroke-width=".5"/>
<path d="M587.0 730.0 C586.8 740.0 585.8 772.5 586.0 790.0 C586.2 807.5 586.5 823.8 588.0 835.0 C589.5 846.2 591.3 852.3 595.0 857.0 C598.7 861.7 604.2 862.3 610.0 863.0 C615.8 863.7 625.5 863.2 630.0 861.0 C634.5 858.8 636.0 860.2 637.0 850.0 C638.0 839.8 635.2 810.8 636.0 800.0 C636.8 789.2 639.3 790.3 642.0 785.0 C644.7 779.7 649.0 771.8 652.0 768.0 C655.0 764.2 658.7 763.0 660.0 762.0 L620.0 700.0 Z" fill="#fe9294"/>
<path d="M628 958 C640 954 672 957 692 963 L704 973 L640 967 Z" fill="#fe9294"/>
<path d="M637 962 C650 957 670 959 682 965 C670 971 648 970 637 966Z" fill="#e07b18" stroke="#3a2000" stroke-width=".5"/>
<path d="M643.0 607.0 C656.5 606.2 691.5 607.2 703.0 611.0 C714.5 614.8 712.0 623.3 712.0 630.0 C712.0 636.7 706.3 640.2 703.0 651.0 C699.7 661.8 695.2 677.5 692.0 695.0 C688.8 712.5 685.7 745.0 684.0 756.0 C682.3 767.0 687.3 760.2 682.0 761.0 C676.7 761.8 659.7 758.5 652.0 761.0 C644.3 763.5 641.5 772.7 636.0 776.0 C630.5 779.3 624.8 781.7 619.0 781.0 C613.2 780.3 606.0 777.5 601.0 772.0 C596.0 766.5 590.8 755.0 589.0 748.0 C587.2 741.0 588.2 743.0 590.0 730.0 C591.8 717.0 596.7 685.7 600.0 670.0 C603.3 654.3 606.3 645.0 610.0 636.0 C613.7 627.0 616.5 620.8 622.0 616.0 C627.5 611.2 629.5 607.8 643.0 607.0 Z" fill="#e68a12" stroke="#fe9294" stroke-width="1.5"/>
<path d="M643.0 607.0 C656.5 606.2 691.5 607.2 703.0 611.0 C714.5 614.8 712.0 623.3 712.0 630.0 C712.0 636.7 706.3 640.2 703.0 651.0 C699.7 661.8 695.2 677.5 692.0 695.0 C688.8 712.5 685.7 745.0 684.0 756.0 C682.3 767.0 687.3 760.2 682.0 761.0 C676.7 761.8 659.7 758.5 652.0 761.0 C644.3 763.5 641.5 772.7 636.0 776.0 C630.5 779.3 624.8 781.7 619.0 781.0 C613.2 780.3 606.0 777.5 601.0 772.0 C596.0 766.5 590.8 755.0 589.0 748.0 C587.2 741.0 588.2 743.0 590.0 730.0 C591.8 717.0 596.7 685.7 600.0 670.0 C603.3 654.3 606.3 645.0 610.0 636.0 C613.7 627.0 616.5 620.8 622.0 616.0 C627.5 611.2 629.5 607.8 643.0 607.0 Z" fill="none" stroke="#2a1800" stroke-width=".6"/>
<path d="M628.0 636.0 C643.8 629.3 698.0 626.0 710.0 630.0 C722.0 634.0 703.3 646.7 700.0 660.0 C696.7 673.3 692.7 694.0 690.0 710.0 C687.3 726.0 688.2 747.7 684.0 756.0 C679.8 764.3 671.7 758.5 665.0 760.0 C658.3 761.5 649.8 762.5 644.0 765.0 C638.2 767.5 635.0 774.3 630.0 775.0 C625.0 775.7 618.2 773.5 614.0 769.0 C609.8 764.5 606.0 759.5 605.0 748.0 C604.0 736.5 606.3 713.0 608.0 700.0 C609.7 687.0 611.7 680.7 615.0 670.0 C618.3 659.3 612.2 642.7 628.0 636.0 Z" fill="url(#gSlot)"/>
<path d="M645 608 L703 612 L712 630 L640 630 C634 631 630 633 628 636 C630 624 636 612 645 608Z" fill="#d0800c"/>
<path d="M712 630 L704 652 L692 696 L684 756 L677 756 L686 698 L698 652 L706 631Z" fill="#c87810"/>
<g stroke="#2a1800" stroke-width=".5" opacity=".6"><path d="M709 633 L680 756"/><path d="M706 633 L678 756"/></g>
<g stroke="#2a1800" stroke-width=".5" opacity=".7"><path d="M648 610 L704 614"/><path d="M644 613 L706 617"/><path d="M640 617 L707 620"/><path d="M636 621 L709 624"/><path d="M633 625 L710 627"/></g>
<path d="M690 700 C688 730 686 750 684 756" stroke="#2a1800" stroke-width="1" fill="none"/>
<path d="M702.5 610.0 C704.6 605.4 709.8 591.0 715.0 582.5 C720.2 574.0 727.0 565.4 733.7 558.7 C740.4 552.0 747.0 546.9 755.0 542.5 C763.0 538.1 777.5 534.2 782.0 532.5 L781.0 556.0 L785.0 559.4 L790.0 560.6 C792.1 561.1 798.8 562.1 802.5 563.8 C806.2 565.5 809.4 567.9 812.5 571.0 C815.6 574.1 819.6 580.6 821.0 582.5 L836.0 606.0 L845.0 585.0 L845.0 585.0 C846.2 587.5 850.2 593.8 852.5 600.0 C854.8 606.2 856.9 615.0 859.0 622.5 C861.1 630.0 862.5 632.1 865.0 645.0 C867.5 657.9 871.8 680.8 874.0 700.0 C876.2 719.2 877.7 740.0 878.0 760.0 C878.3 780.0 878.0 800.0 876.0 820.0 C874.0 840.0 872.0 861.7 866.0 880.0 C860.0 898.3 851.3 917.5 840.0 930.0 C828.7 942.5 805.0 950.8 798.0 955.0 L798.0 955.0 C797.5 955.7 798.7 955.8 795.0 959.0 C791.3 962.2 782.8 970.8 776.0 974.0 C769.2 977.2 763.0 978.0 754.0 978.0 C745.0 978.0 731.5 979.5 722.0 974.0 C712.5 968.5 703.5 956.8 697.0 945.0 C690.5 933.2 687.5 921.7 683.0 903.0 C678.5 884.3 672.6 856.3 670.0 833.0 C667.4 809.7 667.9 774.7 667.5 763.0 L684.0 756.0 L684.0 756.0 C685.3 745.8 688.8 712.5 692.0 695.0 C695.2 677.5 699.7 661.8 703.0 651.0 C706.3 640.2 712.1 636.8 712.0 630.0 C711.9 623.2 704.1 613.3 702.5 610.0 Z" fill="#e07b18" stroke="#2a1800" stroke-width=".7"/>
<path d="M821 583 L845 585 L836 606 Z" fill="#f0b020" stroke="#2a1800" stroke-width=".5"/>
<g stroke="#2a1800" stroke-width=".5"><path d="M824 587 L843 589"/><path d="M827 592 L841 594"/><path d="M830 597 L839 599"/></g>
<path d="M765.0 634.0 C760.5 639.8 745.7 656.0 738.0 669.0 C730.3 682.0 723.2 697.5 719.0 712.0 C714.8 726.5 713.5 741.3 713.0 756.0 C712.5 770.7 713.8 785.7 716.0 800.0 C718.2 814.3 721.2 830.0 726.0 842.0 C730.8 854.0 737.7 863.2 745.0 872.0 C752.3 880.8 765.8 891.2 770.0 895.0 L1120.0 905.0 L1120.0 690.0 L1030.0 700.0 L1030.0 700.0 C1023.3 693.7 1003.8 671.0 990.0 662.0 C976.2 653.0 962.7 649.7 947.0 646.0 C931.3 642.3 904.5 641.0 896.0 640.0 L863.0 645.0 Z" fill="url(#gHub)"/>
<path d="M765.0 634.0 C760.5 639.8 745.7 656.0 738.0 669.0 C730.3 682.0 723.2 697.5 719.0 712.0 C714.8 726.5 713.5 741.3 713.0 756.0 C712.5 770.7 713.8 785.7 716.0 800.0 C718.2 814.3 721.2 830.0 726.0 842.0 C730.8 854.0 741.8 867.0 745.0 872.0" fill="none" stroke="#f08c10" stroke-width="6" opacity=".5" transform="translate(4,0)"/>
<path d="M866.0 647.0 C861.3 650.3 845.8 656.0 838.0 667.0 C830.2 678.0 823.5 695.5 819.0 713.0 C814.5 730.5 811.7 755.2 811.0 772.0 C810.3 788.8 811.3 802.3 815.0 814.0 C818.7 825.7 823.7 833.5 833.0 842.0 C842.3 850.5 855.3 859.2 871.0 865.0 C886.7 870.8 905.5 873.8 927.0 877.0 C948.5 880.2 987.8 882.8 1000.0 884.0" fill="none" stroke="#ffee50" stroke-width="3" opacity=".4" transform="translate(3.5,0)"/>
<path d="M866.0 647.0 C861.3 650.3 845.8 656.0 838.0 667.0 C830.2 678.0 823.5 695.5 819.0 713.0 C814.5 730.5 811.7 755.2 811.0 772.0 C810.3 788.8 811.3 802.3 815.0 814.0 C818.7 825.7 823.7 833.5 833.0 842.0 C842.3 850.5 855.3 859.2 871.0 865.0 C886.7 870.8 905.5 873.8 927.0 877.0 C948.5 880.2 987.8 882.8 1000.0 884.0" fill="none" stroke="#d88410" stroke-width="3" opacity=".35" transform="translate(-2,0)"/>
<path d="M866.0 647.0 C861.3 650.3 845.8 656.0 838.0 667.0 C830.2 678.0 823.5 695.5 819.0 713.0 C814.5 730.5 811.7 755.2 811.0 772.0 C810.3 788.8 811.3 802.3 815.0 814.0 C818.7 825.7 823.7 833.5 833.0 842.0 C842.3 850.5 855.3 859.2 871.0 865.0 C886.7 870.8 905.5 873.8 927.0 877.0 C948.5 880.2 987.8 882.8 1000.0 884.0" fill="none" stroke="#2a1800" stroke-width="1.1"/>
<path d="M910.0 656.0 C905.0 657.8 888.8 659.3 880.0 667.0 C871.2 674.7 862.5 684.5 857.0 702.0 C851.5 719.5 847.8 752.7 847.0 772.0 C846.2 791.3 847.3 805.2 852.0 818.0 C856.7 830.8 866.5 841.2 875.0 849.0 C883.5 856.8 890.5 860.3 903.0 865.0 C915.5 869.7 933.8 873.8 950.0 877.0 C966.2 880.2 991.7 882.8 1000.0 884.0" fill="none" stroke="#ffee50" stroke-width="3" opacity=".4" transform="translate(3.5,0)"/>
<path d="M910.0 656.0 C905.0 657.8 888.8 659.3 880.0 667.0 C871.2 674.7 862.5 684.5 857.0 702.0 C851.5 719.5 847.8 752.7 847.0 772.0 C846.2 791.3 847.3 805.2 852.0 818.0 C856.7 830.8 866.5 841.2 875.0 849.0 C883.5 856.8 890.5 860.3 903.0 865.0 C915.5 869.7 933.8 873.8 950.0 877.0 C966.2 880.2 991.7 882.8 1000.0 884.0" fill="none" stroke="#d88410" stroke-width="3" opacity=".35" transform="translate(-2,0)"/>
<path d="M910.0 656.0 C905.0 657.8 888.8 659.3 880.0 667.0 C871.2 674.7 862.5 684.5 857.0 702.0 C851.5 719.5 847.8 752.7 847.0 772.0 C846.2 791.3 847.3 805.2 852.0 818.0 C856.7 830.8 866.5 841.2 875.0 849.0 C883.5 856.8 890.5 860.3 903.0 865.0 C915.5 869.7 933.8 873.8 950.0 877.0 C966.2 880.2 991.7 882.8 1000.0 884.0" fill="none" stroke="#2a1800" stroke-width="1.1"/>
<path d="M929.0 672.0 C925.5 673.5 914.7 674.2 908.0 681.0 C901.3 687.8 893.3 697.8 889.0 713.0 C884.7 728.2 882.0 754.5 882.0 772.0 C882.0 789.5 884.7 804.5 889.0 818.0 C893.3 831.5 899.8 844.0 908.0 853.0 C916.2 862.0 926.0 867.5 938.0 872.0 C950.0 876.5 973.0 878.7 980.0 880.0" fill="none" stroke="#ffee50" stroke-width="3" opacity=".4" transform="translate(3.5,0)"/>
<path d="M929.0 672.0 C925.5 673.5 914.7 674.2 908.0 681.0 C901.3 687.8 893.3 697.8 889.0 713.0 C884.7 728.2 882.0 754.5 882.0 772.0 C882.0 789.5 884.7 804.5 889.0 818.0 C893.3 831.5 899.8 844.0 908.0 853.0 C916.2 862.0 926.0 867.5 938.0 872.0 C950.0 876.5 973.0 878.7 980.0 880.0" fill="none" stroke="#d88410" stroke-width="3" opacity=".35" transform="translate(-2,0)"/>
<path d="M929.0 672.0 C925.5 673.5 914.7 674.2 908.0 681.0 C901.3 687.8 893.3 697.8 889.0 713.0 C884.7 728.2 882.0 754.5 882.0 772.0 C882.0 789.5 884.7 804.5 889.0 818.0 C893.3 831.5 899.8 844.0 908.0 853.0 C916.2 862.0 926.0 867.5 938.0 872.0 C950.0 876.5 973.0 878.7 980.0 880.0" fill="none" stroke="#2a1800" stroke-width="1.1"/>
<path d="M952.0 695.0 C949.3 696.5 941.0 697.0 936.0 704.0 C931.0 711.0 925.2 723.8 922.0 737.0 C918.8 750.2 916.7 768.7 917.0 783.0 C917.3 797.3 919.7 811.3 924.0 823.0 C928.3 834.7 934.8 844.8 943.0 853.0 C951.2 861.2 963.5 867.8 973.0 872.0 C982.5 876.2 995.5 877.0 1000.0 878.0" fill="none" stroke="#ffee50" stroke-width="3" opacity=".4" transform="translate(3.5,0)"/>
<path d="M952.0 695.0 C949.3 696.5 941.0 697.0 936.0 704.0 C931.0 711.0 925.2 723.8 922.0 737.0 C918.8 750.2 916.7 768.7 917.0 783.0 C917.3 797.3 919.7 811.3 924.0 823.0 C928.3 834.7 934.8 844.8 943.0 853.0 C951.2 861.2 963.5 867.8 973.0 872.0 C982.5 876.2 995.5 877.0 1000.0 878.0" fill="none" stroke="#d88410" stroke-width="3" opacity=".35" transform="translate(-2,0)"/>
<path d="M952.0 695.0 C949.3 696.5 941.0 697.0 936.0 704.0 C931.0 711.0 925.2 723.8 922.0 737.0 C918.8 750.2 916.7 768.7 917.0 783.0 C917.3 797.3 919.7 811.3 924.0 823.0 C928.3 834.7 934.8 844.8 943.0 853.0 C951.2 861.2 963.5 867.8 973.0 872.0 C982.5 876.2 995.5 877.0 1000.0 878.0" fill="none" stroke="#2a1800" stroke-width="1.1"/>
<path d="M976.0 721.0 C973.2 722.8 963.0 723.5 959.0 732.0 C955.0 740.5 952.3 756.8 952.0 772.0 C951.7 787.2 953.5 809.5 957.0 823.0 C960.5 836.5 966.3 844.8 973.0 853.0 C979.7 861.2 989.2 867.8 997.0 872.0 C1004.8 876.2 1016.2 877.0 1020.0 878.0" fill="none" stroke="#ffee50" stroke-width="3" opacity=".4" transform="translate(3.5,0)"/>
<path d="M976.0 721.0 C973.2 722.8 963.0 723.5 959.0 732.0 C955.0 740.5 952.3 756.8 952.0 772.0 C951.7 787.2 953.5 809.5 957.0 823.0 C960.5 836.5 966.3 844.8 973.0 853.0 C979.7 861.2 989.2 867.8 997.0 872.0 C1004.8 876.2 1016.2 877.0 1020.0 878.0" fill="none" stroke="#d88410" stroke-width="3" opacity=".35" transform="translate(-2,0)"/>
<path d="M976.0 721.0 C973.2 722.8 963.0 723.5 959.0 732.0 C955.0 740.5 952.3 756.8 952.0 772.0 C951.7 787.2 953.5 809.5 957.0 823.0 C960.5 836.5 966.3 844.8 973.0 853.0 C979.7 861.2 989.2 867.8 997.0 872.0 C1004.8 876.2 1016.2 877.0 1020.0 878.0" fill="none" stroke="#2a1800" stroke-width="1.1"/>
<path d="M1005.0 752.0 C1002.5 757.2 992.2 770.0 990.0 783.0 C987.8 796.0 989.0 817.5 992.0 830.0 C995.0 842.5 1002.2 851.0 1008.0 858.0 C1013.8 865.0 1020.8 868.7 1027.0 872.0 C1033.2 875.3 1042.0 877.0 1045.0 878.0" fill="none" stroke="#ffee50" stroke-width="3" opacity=".4" transform="translate(3.5,0)"/>
<path d="M1005.0 752.0 C1002.5 757.2 992.2 770.0 990.0 783.0 C987.8 796.0 989.0 817.5 992.0 830.0 C995.0 842.5 1002.2 851.0 1008.0 858.0 C1013.8 865.0 1020.8 868.7 1027.0 872.0 C1033.2 875.3 1042.0 877.0 1045.0 878.0" fill="none" stroke="#d88410" stroke-width="3" opacity=".35" transform="translate(-2,0)"/>
<path d="M1005.0 752.0 C1002.5 757.2 992.2 770.0 990.0 783.0 C987.8 796.0 989.0 817.5 992.0 830.0 C995.0 842.5 1002.2 851.0 1008.0 858.0 C1013.8 865.0 1020.8 868.7 1027.0 872.0 C1033.2 875.3 1042.0 877.0 1045.0 878.0" fill="none" stroke="#2a1800" stroke-width="1.1"/>
<path d="M1034.0 781.0 C1032.3 785.3 1024.8 796.8 1024.0 807.0 C1023.2 817.2 1025.7 832.3 1029.0 842.0 C1032.3 851.7 1038.8 860.0 1044.0 865.0 C1049.2 870.0 1057.3 870.8 1060.0 872.0" fill="none" stroke="#ffee50" stroke-width="3" opacity=".4" transform="translate(3.5,0)"/>
<path d="M1034.0 781.0 C1032.3 785.3 1024.8 796.8 1024.0 807.0 C1023.2 817.2 1025.7 832.3 1029.0 842.0 C1032.3 851.7 1038.8 860.0 1044.0 865.0 C1049.2 870.0 1057.3 870.8 1060.0 872.0" fill="none" stroke="#d88410" stroke-width="3" opacity=".35" transform="translate(-2,0)"/>
<path d="M1034.0 781.0 C1032.3 785.3 1024.8 796.8 1024.0 807.0 C1023.2 817.2 1025.7 832.3 1029.0 842.0 C1032.3 851.7 1038.8 860.0 1044.0 865.0 C1049.2 870.0 1057.3 870.8 1060.0 872.0" fill="none" stroke="#2a1800" stroke-width="1.1"/>
<clipPath id="coneClip"><path d="M896.0 646.0 C898.3 642.0 905.2 631.0 910.0 622.0 C914.8 613.0 920.0 601.5 925.0 592.0 C930.0 582.5 935.8 571.7 940.0 565.0 C944.2 558.3 947.0 554.7 950.0 552.0 C953.0 549.3 955.3 549.3 958.0 549.0 C960.7 548.7 964.7 549.8 966.0 550.0 L966.0 550.0 C969.2 556.0 978.7 570.5 985.0 586.0 C991.3 601.5 997.5 621.0 1004.0 643.0 C1010.5 665.0 1020.7 705.5 1024.0 718.0 L1024.0 718.0 C1020.8 714.5 1012.3 704.7 1005.0 697.0 C997.7 689.3 989.7 679.3 980.0 672.0 C970.3 664.7 961.0 657.3 947.0 653.0 C933.0 648.7 904.5 647.2 896.0 646.0 Z"/></clipPath>
<path d="M896.0 646.0 C898.3 642.0 905.2 631.0 910.0 622.0 C914.8 613.0 920.0 601.5 925.0 592.0 C930.0 582.5 935.8 571.7 940.0 565.0 C944.2 558.3 947.0 554.7 950.0 552.0 C953.0 549.3 955.3 549.3 958.0 549.0 C960.7 548.7 964.7 549.8 966.0 550.0 L966.0 550.0 C969.2 556.0 978.7 570.5 985.0 586.0 C991.3 601.5 997.5 621.0 1004.0 643.0 C1010.5 665.0 1020.7 705.5 1024.0 718.0 L1024.0 718.0 C1020.8 714.5 1012.3 704.7 1005.0 697.0 C997.7 689.3 989.7 679.3 980.0 672.0 C970.3 664.7 961.0 657.3 947.0 653.0 C933.0 648.7 904.5 647.2 896.0 646.0 Z" fill="#eaa216"/>
<g clip-path="url(#coneClip)">
<path d="M951.5 551.4 C955.6 549.1 959.9 549.1 963.0 553.2" fill="none" stroke="#1a0e00" stroke-width=".75" opacity="0.85"/>
<path d="M948.6 553.9 C953.1 551.2 959.2 551.2 965.1 557.4" fill="none" stroke="#1a0e00" stroke-width=".75" opacity="0.85"/>
<path d="M946.7 556.3 C951.7 553.4 959.2 553.4 967.1 561.6" fill="none" stroke="#1a0e00" stroke-width=".75" opacity="0.85"/>
<path d="M944.8 558.7 C950.2 555.5 959.2 555.5 969.2 565.8" fill="none" stroke="#1a0e00" stroke-width=".75" opacity="0.85"/>
<path d="M943.0 561.1 C948.8 557.6 959.2 557.6 971.2 570.0" fill="none" stroke="#1a0e00" stroke-width=".75" opacity="0.85"/>
<path d="M941.1 563.5 C947.4 559.8 959.2 559.8 973.3 574.2" fill="none" stroke="#1a0e00" stroke-width=".75" opacity="0.85"/>
<path d="M939.5 566.0 C946.2 561.9 959.3 561.9 975.3 578.4" fill="none" stroke="#1a0e00" stroke-width=".75" opacity="0.85"/>
<path d="M938.1 568.4 C945.3 564.0 959.6 564.0 977.3 582.6" fill="none" stroke="#1a0e00" stroke-width=".75" opacity="0.85"/>
<path d="M936.8 570.8 C944.4 566.1 959.9 566.1 979.3 586.8" fill="none" stroke="#1a0e00" stroke-width=".75" opacity="0.85"/>
<path d="M935.4 573.2 C943.5 568.2 960.0 568.2 980.7 591.0" fill="none" stroke="#1a0e00" stroke-width=".75" opacity="0.85"/>
<path d="M934.1 575.7 C942.6 570.4 960.1 570.4 982.1 595.2" fill="none" stroke="#1a0e00" stroke-width=".75" opacity="0.85"/>
<path d="M932.7 578.1 C941.7 572.5 960.2 572.5 983.5 599.4" fill="none" stroke="#1a0e00" stroke-width=".75" opacity="0.85"/>
<path d="M931.4 580.5 C940.8 574.6 960.3 574.6 984.9 603.6" fill="none" stroke="#1a0e00" stroke-width=".75" opacity="0.85"/>
<path d="M930.0 583.0 C939.9 576.8 960.4 576.8 986.3 607.8" fill="none" stroke="#1a0e00" stroke-width=".75" opacity="0.85"/>
<path d="M928.7 585.4 C939.0 578.9 960.5 578.9 987.7 612.0" fill="none" stroke="#1a0e00" stroke-width=".75" opacity="0.85"/>
<path d="M927.3 587.8 C938.1 581.0 960.6 581.0 989.1 616.2" fill="none" stroke="#1a0e00" stroke-width=".75" opacity="0.85"/>
<path d="M926.0 590.2 C937.2 583.1 960.7 583.1 990.5 620.4" fill="none" stroke="#1a0e00" stroke-width=".75" opacity="0.85"/>
<path d="M924.7 592.6 C936.4 585.2 960.9 585.2 991.9 624.6" fill="none" stroke="#1a0e00" stroke-width=".75" opacity="0.85"/>
<path d="M923.5 595.1 C935.6 587.4 961.1 587.4 993.3 628.8" fill="none" stroke="#1a0e00" stroke-width=".75" opacity="0.85"/>
<path d="M922.3 597.5 C934.9 589.5 961.2 589.5 994.7 633.0" fill="none" stroke="#1a0e00" stroke-width=".75" opacity="0.85"/>
<path d="M921.0 599.9 C934.1 591.6 961.4 591.6 996.1 637.2" fill="none" stroke="#1a0e00" stroke-width=".75" opacity="0.85"/>
<path d="M919.8 602.4 C933.3 593.8 961.6 593.8 997.5 641.4" fill="none" stroke="#1a0e00" stroke-width=".75" opacity="0.85"/>
<path d="M918.6 604.8 C932.6 595.9 961.8 595.9 998.7 645.6" fill="none" stroke="#1a0e00" stroke-width=".75" opacity="0.85"/>
<path d="M917.4 607.2 C931.8 598.0 961.9 598.0 999.9 649.8" fill="none" stroke="#1a0e00" stroke-width=".75" opacity="0.85"/>
<path d="M916.2 609.6 C931.0 600.1 962.0 600.1 1001.1 654.0" fill="none" stroke="#1a0e00" stroke-width=".75" opacity="0.85"/>
<path d="M915.0 612.0 C930.3 602.2 962.1 602.2 1002.3 658.2" fill="none" stroke="#1a0e00" stroke-width=".75" opacity="0.85"/>
<path d="M913.8 614.5 C929.5 604.4 962.2 604.4 1003.5 662.4" fill="none" stroke="#1a0e00" stroke-width=".75" opacity="0.85"/>
<path d="M912.6 616.9 C928.8 606.5 962.3 606.5 1004.7 666.6" fill="none" stroke="#1a0e00" stroke-width=".75" opacity="0.85"/>
<path d="M911.3 619.3 C928.0 608.6 962.5 608.6 1005.9 670.8" fill="none" stroke="#1a0e00" stroke-width=".75" opacity="0.85"/>
<path d="M910.1 621.8 C927.2 610.8 962.6 610.8 1007.1 675.0" fill="none" stroke="#1a0e00" stroke-width=".75" opacity="0.85"/>
<path d="M908.7 624.2 C926.3 612.9 962.6 612.9 1008.3 679.2" fill="none" stroke="#1a0e00" stroke-width=".75" opacity="0.85"/>
<path d="M907.3 626.6 C925.3 615.0 962.6 615.0 1009.5 683.4" fill="none" stroke="#1a0e00" stroke-width=".75" opacity="0.85"/>
<path d="M905.9 629.0 C924.4 617.1 962.6 617.1 1010.6 687.6" fill="none" stroke="#1a0e00" stroke-width=".75" opacity="0.85"/>
<path d="M904.5 631.5 C923.4 619.2 962.5 619.2 1011.8 691.8" fill="none" stroke="#1a0e00" stroke-width=".75" opacity="0.85"/>
<path d="M903.1 633.9 C922.4 621.4 962.5 621.4 1013.0 696.0" fill="none" stroke="#1a0e00" stroke-width=".75" opacity="0.85"/>
<path d="M901.7 636.3 C921.5 623.5 962.5 623.5 1014.2 700.2" fill="none" stroke="#1a0e00" stroke-width=".75" opacity="0.85"/>
<path d="M900.2 638.7 C920.5 625.6 962.5 625.6 1015.4 704.4" fill="none" stroke="#1a0e00" stroke-width=".75" opacity="0.85"/>
<path d="M898.8 641.1 C919.5 627.8 962.5 627.8 1016.6 708.6" fill="none" stroke="#1a0e00" stroke-width=".75" opacity="0.85"/>
<path d="M897.4 643.6 C918.6 629.9 963.3 629.9 1020.1 712.8" fill="none" stroke="#1a0e00" stroke-width=".75" opacity="0.85"/>
<path d="M958 552 C972 590 992 650 1016 718 L1004 716 C988 665 968 612 952 562Z" fill="#1a0e00" opacity=".4"/>
<path d="M950 553 C935 575 915 612 898 644 L905 645 C921 614 941 580 954 558Z" fill="#1a0e00" opacity=".45"/>
</g>
<path d="M800.0 845.0 C810.0 848.8 835.0 861.3 860.0 868.0 C885.0 874.7 918.3 881.3 950.0 885.0 C981.7 888.7 1023.3 889.2 1050.0 890.0 C1076.7 890.8 1100.0 890.0 1110.0 890.0" fill="none" stroke="#e0820c" stroke-width="22" opacity=".35"/>
<path d="M789.0 836.0 C791.2 837.7 791.2 842.0 802.0 846.0 C812.8 850.0 831.2 854.3 854.0 860.0 C876.8 865.7 907.7 876.7 939.0 880.0 C970.3 883.3 1013.5 879.2 1042.0 880.0 C1070.5 880.8 1098.7 884.2 1110.0 885.0 L1200.0 880.0 L1200.0 925.0 L1200.0 925.0 C1195.8 925.8 1186.8 924.7 1175.0 930.0 C1163.2 935.3 1148.0 947.5 1129.0 957.0 C1110.0 966.5 1087.7 980.2 1061.0 987.0 C1034.3 993.8 990.8 996.8 969.0 998.0 C947.2 999.2 936.5 994.7 930.0 994.0 L930.0 994.0 C921.2 991.0 897.7 985.0 877.5 975.8 C857.3 966.6 827.8 952.0 808.7 939.0 C789.6 926.0 770.6 904.8 763.0 898.0 L763.0 898.0 C763.3 895.7 762.3 891.0 765.0 884.0 C767.7 877.0 775.0 864.0 779.0 856.0 C783.0 848.0 787.3 839.3 789.0 836.0 Z" fill="url(#gSweep)"/>
<path d="M789.0 840.0 C797.5 842.7 818.2 850.0 840.0 856.0 C861.8 862.0 893.3 871.3 920.0 876.0 C946.7 880.7 973.3 882.3 1000.0 884.0 C1026.7 885.7 1053.3 885.0 1080.0 886.0 C1106.7 887.0 1146.7 889.3 1160.0 890.0" fill="none" stroke="#1e1000" stroke-width="0.8" opacity="0.90"/>
<path d="M788.0 842.5 C796.6 845.3 817.7 853.2 839.6 859.5 C861.4 865.8 892.5 875.5 919.1 880.3 C945.8 885.2 972.8 886.9 999.6 888.5 C1026.4 890.1 1053.2 889.3 1080.0 889.9 C1106.8 890.5 1147.0 891.8 1160.4 892.2" fill="none" stroke="#1e1000" stroke-width="0.8" opacity="0.90"/>
<path d="M786.9 845.0 C795.6 848.0 817.2 856.3 839.1 863.0 C861.0 869.6 891.6 879.7 918.3 884.7 C944.9 889.7 972.2 891.5 999.1 893.0 C1026.1 894.6 1053.0 893.6 1080.0 893.8 C1107.0 894.0 1147.4 894.3 1160.9 894.3" fill="none" stroke="#1e1000" stroke-width="0.8" opacity="0.90"/>
<path d="M785.9 847.6 C794.7 850.7 816.8 859.5 838.7 866.4 C860.6 873.3 890.7 883.9 917.4 889.0 C944.1 894.2 971.6 896.1 998.7 897.6 C1025.8 899.0 1052.9 897.9 1080.0 897.7 C1107.1 897.6 1147.8 896.7 1161.3 896.5" fill="none" stroke="#1e1000" stroke-width="0.8" opacity="0.90"/>
<path d="M784.8 850.1 C793.7 853.4 816.3 862.7 838.3 869.9 C860.2 877.1 889.9 888.0 916.5 893.4 C943.2 898.8 971.0 900.7 998.3 902.1 C1025.5 903.5 1052.8 902.2 1080.0 901.7 C1107.2 901.1 1148.1 899.2 1161.7 898.7" fill="none" stroke="#1e1000" stroke-width="0.8" opacity="0.90"/>
<path d="M783.8 852.6 C792.8 856.1 815.8 865.9 837.8 873.4 C859.8 880.9 889.0 892.2 915.7 897.7 C942.3 903.3 970.4 905.3 997.8 906.6 C1025.2 907.9 1052.6 906.5 1080.0 905.6 C1107.4 904.6 1148.5 901.7 1162.2 900.9" fill="none" stroke="#1e1000" stroke-width="0.8" opacity="0.90"/>
<path d="M782.7 855.1 C791.8 858.8 815.4 869.0 837.4 876.9 C859.4 884.7 888.1 896.4 914.8 902.1 C941.4 907.8 969.9 909.9 997.4 911.1 C1024.9 912.4 1052.5 910.8 1080.0 909.5 C1107.5 908.1 1148.8 904.1 1162.6 903.0" fill="none" stroke="#1e1000" stroke-width="0.8" opacity="0.90"/>
<path d="M781.7 857.7 C790.9 861.4 814.9 872.2 837.0 880.3 C859.0 888.5 887.2 900.6 913.9 906.4 C940.6 912.3 969.3 914.5 997.0 915.7 C1024.6 916.8 1052.3 915.1 1080.0 913.4 C1107.7 911.7 1149.2 906.6 1163.0 905.2" fill="none" stroke="#1e1000" stroke-width="0.8" opacity="0.89"/>
<path d="M780.7 860.2 C790.0 864.1 814.5 875.4 836.5 883.8 C858.6 892.3 886.4 904.7 913.0 910.8 C939.7 916.8 968.7 919.1 996.5 920.2 C1024.3 921.3 1052.2 919.4 1080.0 917.3 C1107.8 915.2 1149.6 909.0 1163.5 907.4" fill="none" stroke="#1e1000" stroke-width="0.8" opacity="0.83"/>
<path d="M779.6 862.7 C789.0 866.8 814.0 878.6 836.1 887.3 C858.2 896.0 885.5 908.9 912.2 915.1 C938.8 921.4 968.1 923.7 996.1 924.7 C1024.1 925.7 1052.0 923.7 1080.0 921.2 C1108.0 918.7 1149.9 911.5 1163.9 909.6" fill="none" stroke="#1e1000" stroke-width="0.8" opacity="0.76"/>
<path d="M778.6 865.2 C788.1 869.5 813.5 881.7 835.7 890.8 C857.8 899.8 884.6 913.1 911.3 919.5 C938.0 925.9 967.5 928.3 995.7 929.2 C1023.8 930.2 1051.9 928.0 1080.0 925.1 C1108.1 922.2 1150.3 914.0 1164.3 911.7" fill="none" stroke="#1e1000" stroke-width="0.55" opacity="0.70"/>
<path d="M777.5 867.7 C787.1 872.2 813.1 884.9 835.2 894.3 C857.4 903.6 883.8 917.2 910.4 923.8 C937.1 930.4 967.0 932.9 995.2 933.7 C1023.5 934.6 1051.7 932.3 1080.0 929.0 C1108.3 925.7 1150.7 916.4 1164.8 913.9" fill="none" stroke="#1e1000" stroke-width="0.55" opacity="0.63"/>
<path d="M776.5 870.3 C786.2 874.8 812.6 888.1 834.8 897.7 C857.0 907.4 882.9 921.4 909.6 928.2 C936.2 934.9 966.4 937.5 994.8 938.3 C1023.2 939.1 1051.6 936.7 1080.0 933.0 C1108.4 929.3 1151.0 918.9 1165.2 916.1" fill="none" stroke="#1e1000" stroke-width="0.55" opacity="0.57"/>
<path d="M775.4 872.8 C785.3 877.5 812.1 891.3 834.3 901.2 C856.6 911.2 882.0 925.6 908.7 932.5 C935.4 939.4 965.8 942.1 994.3 942.8 C1022.9 943.5 1051.4 941.0 1080.0 936.9 C1108.6 932.8 1151.4 921.4 1165.7 918.3" fill="none" stroke="#1e1000" stroke-width="0.55" opacity="0.50"/>
<path d="M774.4 875.3 C784.3 880.2 811.7 894.4 833.9 904.7 C856.2 915.0 881.2 929.8 907.8 936.9 C934.5 944.0 965.2 946.7 993.9 947.3 C1022.6 948.0 1051.3 945.3 1080.0 940.8 C1108.7 936.3 1151.7 923.8 1166.1 920.4" fill="none" stroke="#1e1000" stroke-width="0.55" opacity="0.44"/>
<path d="M773.3 877.8 C783.4 882.9 811.2 897.6 833.5 908.2 C855.7 918.7 880.3 933.9 907.0 941.2 C933.6 948.5 964.6 951.2 993.5 951.8 C1022.3 952.4 1051.2 949.6 1080.0 944.7 C1108.8 939.8 1152.1 926.3 1166.5 922.6" fill="none" stroke="#1e1000" stroke-width="0.55" opacity="0.37"/>
<path d="M772.3 880.3 C782.4 885.6 810.7 900.8 833.0 911.7 C855.3 922.5 879.4 938.1 906.1 945.6 C932.8 953.0 964.1 955.8 993.0 956.3 C1022.0 956.9 1051.0 953.9 1080.0 948.6 C1109.0 943.3 1152.5 928.8 1167.0 924.8" fill="none" stroke="#1e1000" stroke-width="0.55" opacity="0.31"/>
<path d="M771.3 882.9 C781.5 888.2 810.3 904.0 832.6 915.1 C854.9 926.3 878.6 942.3 905.2 949.9 C931.9 957.5 963.5 960.4 992.6 960.9 C1021.7 961.3 1050.9 958.2 1080.0 952.5 C1109.1 946.9 1152.8 931.2 1167.4 927.0" fill="none" stroke="#1e1000" stroke-width="0.55" opacity="0.24"/>
<path d="M770.2 885.4 C780.5 890.9 809.8 907.1 832.2 918.6 C854.5 930.1 877.7 946.5 904.3 954.3 C931.0 962.1 962.9 965.0 992.2 965.4 C1021.4 965.8 1050.7 962.5 1080.0 956.4 C1109.3 950.4 1153.2 933.7 1167.8 929.1" fill="none" stroke="#1e1000" stroke-width="0.55" opacity="0.18"/>
<path d="M769.2 887.9 C779.6 893.6 809.4 910.3 831.7 922.1 C854.1 933.9 876.8 950.6 903.5 958.6 C930.1 966.6 962.3 969.6 991.7 969.9 C1021.2 970.2 1050.6 966.8 1080.0 960.3 C1109.4 953.9 1153.6 936.1 1168.3 931.3" fill="none" stroke="#1e1000" stroke-width="0.55" opacity="0.12"/>
<path d="M768.1 890.4 C778.7 896.3 808.9 913.5 831.3 925.6 C853.7 937.7 875.9 954.8 902.6 963.0 C929.3 971.1 961.7 974.2 991.3 974.4 C1020.9 974.7 1050.4 971.1 1080.0 964.3 C1109.6 957.4 1153.9 938.6 1168.7 933.5" fill="none" stroke="#1e1000" stroke-width="0.55" opacity="0.12"/>
<path d="M767.1 893.0 C777.7 899.0 808.4 916.7 830.9 929.0 C853.3 941.4 875.1 959.0 901.7 967.3 C928.4 975.6 961.2 978.8 990.9 979.0 C1020.6 979.1 1050.3 975.4 1080.0 968.2 C1109.7 961.0 1154.3 941.1 1169.1 935.7" fill="none" stroke="#1e1000" stroke-width="0.55" opacity="0.12"/>
<path d="M766.0 895.5 C776.8 901.7 808.0 919.8 830.4 932.5 C852.9 945.2 874.2 963.2 900.9 971.7 C927.5 980.1 960.6 983.4 990.4 983.5 C1020.3 983.6 1050.1 979.7 1080.0 972.1 C1109.9 964.5 1154.6 943.5 1169.6 937.8" fill="none" stroke="#1e1000" stroke-width="0.55" opacity="0.12"/>
<path d="M765.0 898.0 C775.8 904.3 807.5 923.0 830.0 936.0 C852.5 949.0 873.3 967.3 900.0 976.0 C926.7 984.7 960.0 988.0 990.0 988.0 C1020.0 988.0 1050.0 984.0 1080.0 976.0 C1110.0 968.0 1155.0 946.0 1170.0 940.0" fill="none" stroke="#1e1000" stroke-width="0.55" opacity="0.12"/>
<path d="M789 836 C795 830 805 832 812 842" fill="none" stroke="#fff6a0" stroke-width="3" opacity=".8"/>
<path d="M763.0 898.0 C770.6 904.8 789.6 926.0 808.7 939.0 C827.8 952.0 857.3 966.6 877.5 975.8 C897.7 985.0 921.2 991.0 930.0 994.0 L930.0 994.0 C928.8 994.4 935.6 997.9 923.0 996.4 C910.4 994.9 875.6 991.5 854.6 985.0 C833.6 978.5 813.1 968.2 797.0 957.5 C780.9 946.8 764.8 930.6 758.0 921.0 C751.2 911.4 756.3 903.5 756.0 900.0 Z" fill="url(#gWB)" stroke="#444" stroke-width=".5"/>
<path d="M756.0 900.0 C756.3 903.5 751.2 911.4 758.0 921.0 C764.8 930.6 780.9 946.8 797.0 957.5 C813.1 968.2 833.6 978.5 854.6 985.0 C875.6 991.5 911.6 994.5 923.0 996.4" fill="none" stroke="#e86c6c" stroke-width=".8"/>
<path d="M1040.0 676.0 C1043.3 677.3 1054.2 682.7 1060.0 684.0 C1065.8 685.3 1070.5 683.5 1075.0 684.0 C1079.5 684.5 1082.8 686.3 1087.0 687.0 C1091.2 687.7 1095.3 687.2 1100.0 688.0 C1104.7 688.8 1110.3 691.0 1115.0 692.0 C1119.7 693.0 1123.8 692.7 1128.0 694.0 C1132.2 695.3 1135.5 698.7 1140.0 700.0 C1144.5 701.3 1150.0 701.0 1155.0 702.0 C1160.0 703.0 1164.5 705.0 1170.0 706.0 C1175.5 707.0 1182.2 707.0 1188.0 708.0 C1193.8 709.0 1199.3 710.7 1205.0 712.0 C1210.7 713.3 1216.7 714.3 1222.0 716.0 C1227.3 717.7 1230.3 720.0 1237.0 722.0 C1243.7 724.0 1253.2 726.3 1262.0 728.0 C1270.8 729.7 1285.3 731.3 1290.0 732.0 L1250.0 760.0 L1241.0 846.0 L1186.0 941.0 L1120.0 900.0 L1047.0 700.0 Z" fill="url(#gRight)"/>
<path d="M1047.0 690.0 C1054.2 697.0 1077.0 720.3 1090.0 732.0 C1103.0 743.7 1113.0 750.3 1125.0 760.0 C1137.0 769.7 1150.8 780.0 1162.0 790.0 C1173.2 800.0 1182.3 813.0 1192.0 820.0 C1201.7 827.0 1211.8 827.7 1220.0 832.0 C1228.2 836.3 1237.5 843.7 1241.0 846.0 L1186.0 941.0 L1150.0 910.0 L1100.0 860.0 L1100.0 860.0 C1095.0 850.0 1078.3 820.0 1070.0 800.0 C1061.7 780.0 1053.8 758.3 1050.0 740.0 C1046.2 721.7 1047.5 698.3 1047.0 690.0 Z" fill="#f09c14"/>
<path d="M1075.0 684.0 C1072.8 684.7 1065.0 685.0 1062.0 688.0 C1059.0 691.0 1057.0 697.3 1057.0 702.0 C1057.0 706.7 1059.8 712.7 1062.0 716.0 C1064.2 719.3 1068.7 721.0 1070.0 722.0" fill="none" stroke="#fff070" stroke-width="5" opacity=".5" transform="translate(5,2)"/>
<path d="M1075.0 684.0 C1072.8 684.7 1065.0 685.0 1062.0 688.0 C1059.0 691.0 1057.0 697.3 1057.0 702.0 C1057.0 706.7 1059.8 712.7 1062.0 716.0 C1064.2 719.3 1068.7 721.0 1070.0 722.0" fill="none" stroke="#2a1800" stroke-width="1.1"/>
<path d="M1103.0 688.0 C1100.7 688.7 1092.7 688.0 1089.0 692.0 C1085.3 696.0 1082.2 706.5 1081.0 712.0 C1079.8 717.5 1080.5 721.7 1082.0 725.0 C1083.5 728.3 1088.7 730.8 1090.0 732.0" fill="none" stroke="#fff070" stroke-width="5" opacity=".5" transform="translate(5,2)"/>
<path d="M1103.0 688.0 C1100.7 688.7 1092.7 688.0 1089.0 692.0 C1085.3 696.0 1082.2 706.5 1081.0 712.0 C1079.8 717.5 1080.5 721.7 1082.0 725.0 C1083.5 728.3 1088.7 730.8 1090.0 732.0" fill="none" stroke="#2a1800" stroke-width="1.1"/>
<path d="M1133.0 695.0 C1130.5 695.5 1122.2 693.5 1118.0 698.0 C1113.8 702.5 1109.3 714.7 1108.0 722.0 C1106.7 729.3 1107.2 735.7 1110.0 742.0 C1112.8 748.3 1122.5 757.0 1125.0 760.0" fill="none" stroke="#fff070" stroke-width="5" opacity=".5" transform="translate(5,2)"/>
<path d="M1133.0 695.0 C1130.5 695.5 1122.2 693.5 1118.0 698.0 C1113.8 702.5 1109.3 714.7 1108.0 722.0 C1106.7 729.3 1107.2 735.7 1110.0 742.0 C1112.8 748.3 1122.5 757.0 1125.0 760.0" fill="none" stroke="#2a1800" stroke-width="1.1"/>
<path d="M1160.0 703.0 C1157.5 703.5 1148.8 700.7 1145.0 706.0 C1141.2 711.3 1137.8 725.2 1137.0 735.0 C1136.2 744.8 1137.5 757.2 1140.0 765.0 C1142.5 772.8 1148.3 777.8 1152.0 782.0 C1155.7 786.2 1160.3 788.7 1162.0 790.0" fill="none" stroke="#fff070" stroke-width="5" opacity=".5" transform="translate(5,2)"/>
<path d="M1160.0 703.0 C1157.5 703.5 1148.8 700.7 1145.0 706.0 C1141.2 711.3 1137.8 725.2 1137.0 735.0 C1136.2 744.8 1137.5 757.2 1140.0 765.0 C1142.5 772.8 1148.3 777.8 1152.0 782.0 C1155.7 786.2 1160.3 788.7 1162.0 790.0" fill="none" stroke="#2a1800" stroke-width="1.1"/>
<path d="M1192.0 709.0 C1189.3 709.5 1180.0 706.5 1176.0 712.0 C1172.0 717.5 1169.2 732.0 1168.0 742.0 C1166.8 752.0 1167.5 762.0 1169.0 772.0 C1170.5 782.0 1173.2 794.0 1177.0 802.0 C1180.8 810.0 1189.5 817.0 1192.0 820.0" fill="none" stroke="#fff070" stroke-width="5" opacity=".5" transform="translate(5,2)"/>
<path d="M1192.0 709.0 C1189.3 709.5 1180.0 706.5 1176.0 712.0 C1172.0 717.5 1169.2 732.0 1168.0 742.0 C1166.8 752.0 1167.5 762.0 1169.0 772.0 C1170.5 782.0 1173.2 794.0 1177.0 802.0 C1180.8 810.0 1189.5 817.0 1192.0 820.0" fill="none" stroke="#2a1800" stroke-width="1.1"/>
<path d="M1225.0 716.0 C1222.5 716.5 1213.8 711.7 1210.0 719.0 C1206.2 726.3 1202.7 746.5 1202.0 760.0 C1201.3 773.5 1203.0 788.3 1206.0 800.0 C1209.0 811.7 1217.7 825.0 1220.0 830.0" fill="none" stroke="#fff070" stroke-width="5" opacity=".5" transform="translate(5,2)"/>
<path d="M1225.0 716.0 C1222.5 716.5 1213.8 711.7 1210.0 719.0 C1206.2 726.3 1202.7 746.5 1202.0 760.0 C1201.3 773.5 1203.0 788.3 1206.0 800.0 C1209.0 811.7 1217.7 825.0 1220.0 830.0" fill="none" stroke="#2a1800" stroke-width="1.1"/>
<path d="M1262.0 728.0 C1258.7 728.0 1246.5 720.7 1242.0 728.0 C1237.5 735.3 1235.8 756.3 1235.0 772.0 C1234.2 787.7 1236.0 809.7 1237.0 822.0 C1238.0 834.3 1240.3 842.0 1241.0 846.0" fill="none" stroke="#fff070" stroke-width="5" opacity=".5" transform="translate(5,2)"/>
<path d="M1262.0 728.0 C1258.7 728.0 1246.5 720.7 1242.0 728.0 C1237.5 735.3 1235.8 756.3 1235.0 772.0 C1234.2 787.7 1236.0 809.7 1237.0 822.0 C1238.0 834.3 1240.3 842.0 1241.0 846.0" fill="none" stroke="#2a1800" stroke-width="1.1"/>
<path d="M1049.0 695.0 C1054.2 699.8 1067.3 712.8 1080.0 724.0 C1092.7 735.2 1110.0 749.7 1125.0 762.0 C1140.0 774.3 1154.2 785.7 1170.0 798.0 C1185.8 810.3 1208.3 827.7 1220.0 836.0 C1231.7 844.3 1236.7 846.0 1240.0 848.0" fill="none" stroke="#1a0e00" stroke-width="6" opacity=".45"/>
<path d="M1056.0 704.0 C1060.0 707.7 1071.0 718.0 1080.0 726.0 C1089.0 734.0 1101.7 745.0 1110.0 752.0 C1118.3 759.0 1126.7 765.3 1130.0 768.0" fill="none" stroke="#0e0800" stroke-width="9" opacity=".5"/>
<path d="M1050.0 700.0 C1056.7 706.3 1076.7 726.7 1090.0 738.0 C1103.3 749.3 1116.7 757.7 1130.0 768.0 C1143.3 778.3 1152.0 786.3 1170.0 800.0 C1188.0 813.7 1226.7 841.7 1238.0 850.0" fill="none" stroke="#241400" stroke-width=".6" opacity="0.85"/>
<path d="M1050.3 701.7 C1056.9 708.2 1076.9 728.9 1090.1 740.7 C1103.4 752.4 1116.5 761.3 1129.7 772.0 C1142.8 782.7 1151.6 791.2 1169.2 805.0 C1186.8 818.8 1224.0 846.4 1235.0 854.7" fill="none" stroke="#241400" stroke-width=".6" opacity="0.81"/>
<path d="M1050.5 703.3 C1057.2 710.0 1077.1 731.2 1090.3 743.3 C1103.4 755.4 1116.3 764.9 1129.3 776.0 C1142.4 787.1 1151.3 796.1 1168.4 810.0 C1185.5 823.9 1221.4 851.1 1232.0 859.3" fill="none" stroke="#241400" stroke-width=".6" opacity="0.77"/>
<path d="M1050.8 705.0 C1057.4 711.8 1077.4 733.5 1090.4 746.0 C1103.4 758.5 1116.1 768.5 1129.0 780.0 C1141.9 791.5 1150.9 801.0 1167.6 815.0 C1184.3 829.0 1218.8 855.8 1229.0 864.0" fill="none" stroke="#241400" stroke-width=".6" opacity="0.73"/>
<path d="M1051.1 706.7 C1057.6 713.7 1077.6 735.8 1090.5 748.7 C1103.5 761.6 1116.0 772.1 1128.7 784.0 C1141.4 795.9 1150.6 805.9 1166.8 820.0 C1183.0 834.1 1216.1 860.6 1226.0 868.7" fill="none" stroke="#241400" stroke-width=".6" opacity="0.69"/>
<path d="M1051.3 708.3 C1057.9 715.5 1077.8 738.1 1090.7 751.3 C1103.5 764.6 1115.8 775.7 1128.3 788.0 C1140.9 800.3 1150.2 810.8 1166.0 825.0 C1181.8 839.2 1213.5 865.3 1223.0 873.3" fill="none" stroke="#241400" stroke-width=".6" opacity="0.65"/>
<path d="M1051.6 710.0 C1058.1 717.3 1078.1 740.3 1090.8 754.0 C1103.5 767.7 1115.6 779.3 1128.0 792.0 C1140.4 804.7 1149.9 815.7 1165.2 830.0 C1180.5 844.3 1210.9 870.0 1220.0 878.0" fill="none" stroke="#241400" stroke-width=".6" opacity="0.61"/>
<path d="M1051.9 711.7 C1058.4 719.2 1078.3 742.6 1090.9 756.7 C1103.6 770.7 1115.4 782.9 1127.7 796.0 C1139.9 809.1 1149.5 820.6 1164.4 835.0 C1179.3 849.4 1208.2 874.7 1217.0 882.7" fill="none" stroke="#241400" stroke-width=".6" opacity="0.57"/>
<path d="M1052.1 713.3 C1058.6 721.0 1078.5 744.9 1091.1 759.3 C1103.6 773.8 1115.2 786.6 1127.3 800.0 C1139.4 813.4 1149.2 825.4 1163.6 840.0 C1178.0 854.6 1205.6 879.4 1214.0 887.3" fill="none" stroke="#241400" stroke-width=".6" opacity="0.53"/>
<path d="M1052.4 715.0 C1058.9 722.8 1078.8 747.2 1091.2 762.0 C1103.6 776.8 1115.1 790.2 1127.0 804.0 C1138.9 817.8 1148.8 830.3 1162.8 845.0 C1176.8 859.7 1203.0 884.2 1211.0 892.0" fill="none" stroke="#241400" stroke-width=".6" opacity="0.49"/>
<path d="M1052.7 716.7 C1059.1 724.7 1079.0 749.4 1091.3 764.7 C1103.7 779.9 1114.9 793.8 1126.7 808.0 C1138.4 822.2 1148.4 835.2 1162.0 850.0 C1175.6 864.8 1200.3 888.9 1208.0 896.7" fill="none" stroke="#241400" stroke-width=".6" opacity="0.45"/>
<path d="M1052.9 718.3 C1059.4 726.5 1079.2 751.7 1091.5 767.3 C1103.7 782.9 1114.7 797.4 1126.3 812.0 C1138.0 826.6 1148.1 840.1 1161.2 855.0 C1174.3 869.9 1197.7 893.6 1205.0 901.3" fill="none" stroke="#241400" stroke-width=".6" opacity="0.41"/>
<path d="M1053.2 720.0 C1059.6 728.3 1079.5 754.0 1091.6 770.0 C1103.7 786.0 1114.5 801.0 1126.0 816.0 C1137.5 831.0 1147.7 845.0 1160.4 860.0 C1173.1 875.0 1195.1 898.3 1202.0 906.0" fill="none" stroke="#241400" stroke-width=".6" opacity="0.37"/>
<path d="M1053.5 721.7 C1059.8 730.2 1079.7 756.3 1091.7 772.7 C1103.8 789.1 1114.4 804.6 1125.7 820.0 C1137.0 835.4 1147.4 849.9 1159.6 865.0 C1171.8 880.1 1192.4 903.1 1199.0 910.7" fill="none" stroke="#241400" stroke-width=".6" opacity="0.33"/>
<path d="M1053.7 723.3 C1060.1 732.0 1079.9 758.6 1091.9 775.3 C1103.8 792.1 1114.2 808.2 1125.3 824.0 C1136.5 839.8 1147.0 854.8 1158.8 870.0 C1170.6 885.2 1189.8 907.8 1196.0 915.3" fill="none" stroke="#241400" stroke-width=".6" opacity="0.29"/>
<path d="M1054.0 725.0 C1060.3 733.8 1080.2 760.8 1092.0 778.0 C1103.8 795.2 1114.0 811.8 1125.0 828.0 C1136.0 844.2 1146.7 859.7 1158.0 875.0 C1169.3 890.3 1187.2 912.5 1193.0 920.0" fill="none" stroke="#241400" stroke-width=".6" opacity="0.25"/>
<path d="M959.0 549.0 C962.0 555.2 970.8 570.3 977.0 586.0 C983.2 601.7 989.7 622.3 996.0 643.0 C1002.3 663.7 1007.5 688.2 1015.0 710.0 C1022.5 731.8 1031.7 754.0 1041.0 774.0 C1050.3 794.0 1059.7 812.5 1071.0 830.0 C1082.3 847.5 1095.8 863.3 1109.0 879.0 C1122.2 894.7 1136.8 909.0 1150.0 924.0 C1163.2 939.0 1181.7 961.5 1188.0 969.0 L1193.0 967.0 L1188.0 939.0 C1187.3 937.2 1190.3 939.3 1184.0 928.0 C1177.7 916.7 1161.3 888.0 1150.0 871.0 C1138.7 854.0 1127.2 842.8 1116.0 826.0 C1104.8 809.2 1093.5 790.0 1083.0 770.0 C1072.5 750.0 1061.2 726.0 1053.0 706.0 C1044.8 686.0 1040.3 668.7 1034.0 650.0 C1027.7 631.3 1021.3 610.3 1015.0 594.0 C1008.7 577.7 999.2 559.0 996.0 552.0 Z" fill="url(#gBladeW)" stroke="#333" stroke-width=".7"/>
<path d="M959.0 549.0 C962.0 555.2 970.8 570.3 977.0 586.0 C983.2 601.7 989.7 622.3 996.0 643.0 C1002.3 663.7 1007.5 688.2 1015.0 710.0 C1022.5 731.8 1031.7 754.0 1041.0 774.0 C1050.3 794.0 1059.7 812.5 1071.0 830.0 C1082.3 847.5 1095.8 863.3 1109.0 879.0 C1122.2 894.7 1136.8 909.0 1150.0 924.0 C1163.2 939.0 1181.7 961.5 1188.0 969.0" fill="none" stroke="#f29a9a" stroke-width="1" transform="translate(1.5,0)"/>
<path d="M1262 728 L1300 722 L1300 742 L1262 742Z" fill="#f0a018"/>
<path d="M1331 640 L1343 634 L1297 727 L1287 731 Z" fill="#e8a020" stroke="#2a1800" stroke-width=".5"/>
<path d="M1333.0 640.0 L1289.0 731.0" stroke="#2a1800" stroke-width=".5" opacity=".7"/>
<path d="M1334.8 639.0 L1290.8 730.2" stroke="#2a1800" stroke-width=".5" opacity=".7"/>
<path d="M1336.6 638.0 L1292.6 729.4" stroke="#2a1800" stroke-width=".5" opacity=".7"/>
<path d="M1338.4 637.0 L1294.4 728.6" stroke="#2a1800" stroke-width=".5" opacity=".7"/>
<path d="M1340.2 636.0 L1296.2 727.8" stroke="#2a1800" stroke-width=".5" opacity=".7"/>
<path d="M1342.0 635.0 L1298.0 727.0" stroke="#2a1800" stroke-width=".5" opacity=".7"/>
<path d="M1364 664 L1368 670 L1314 768 L1310 762 Z" fill="#e08a18"/>
<path d="M1342.0 634.0 L1356.0 638.0 L1364.0 664.0 L1310.0 762.0 L1310.0 762.0 C1310.2 767.7 1312.5 782.8 1311.0 796.0 C1309.5 809.2 1306.0 828.3 1301.0 841.0 C1296.0 853.7 1287.5 865.8 1281.0 872.0 C1274.5 878.2 1265.2 877.0 1262.0 878.0 L1253.0 872.0 L1247.0 870.0 L1193.0 969.0 L1186.0 941.0 L1241.0 846.0 L1241.0 846.0 C1240.3 841.3 1236.8 830.0 1237.0 818.0 C1237.2 806.0 1238.5 786.7 1242.0 774.0 C1245.5 761.3 1253.7 749.0 1258.0 742.0 C1262.3 735.0 1266.3 733.7 1268.0 732.0 L1287.0 731.0 L1292.0 736.0 L1297.0 727.0 Z" fill="#e89018" stroke="#2a1800" stroke-width=".6" transform="translate(4,5)"/>
<path d="M1342.0 634.0 L1356.0 638.0 L1364.0 664.0 L1310.0 762.0 L1310.0 762.0 C1310.2 767.7 1312.5 782.8 1311.0 796.0 C1309.5 809.2 1306.0 828.3 1301.0 841.0 C1296.0 853.7 1287.5 865.8 1281.0 872.0 C1274.5 878.2 1265.2 877.0 1262.0 878.0 L1253.0 872.0 L1247.0 870.0 L1193.0 969.0 L1186.0 941.0 L1241.0 846.0 L1241.0 846.0 C1240.3 841.3 1236.8 830.0 1237.0 818.0 C1237.2 806.0 1238.5 786.7 1242.0 774.0 C1245.5 761.3 1253.7 749.0 1258.0 742.0 C1262.3 735.0 1266.3 733.7 1268.0 732.0 L1287.0 731.0 L1292.0 736.0 L1297.0 727.0 Z" fill="#adadad" stroke="#e86c6c" stroke-width="1.2" stroke-linejoin="round"/>
<path d="M1154 354 L1156 465 C1165 480 1215 486 1270 486 C1330 486 1372 476 1379 462 L1377 352 Z" fill="url(#gBlue)"/>
<ellipse cx="1266" cy="353" rx="111.5" ry="23" fill="#3d7cbd"/>
<path d="M1232 484 L1233 508 C1250 513 1290 513 1304 508 L1303 484 Z" fill="url(#gGray)"/>
<path d="M1233 508 L1236 723 C1250 733 1290 733 1307 723 L1305 508 C1290 513 1250 513 1233 508 Z" fill="url(#gGreen)"/>
</svg><!--/MODEL-->
<!-- GRAPHICS TOOLBAR -->
<div class="a" style="left:936px;top:169px;width:318px;height:32px;background:#f7f8f9;border:1px solid #9da3a6"></div>
<svg class="a" style="left:940px;top:173px" width="312" height="24" viewBox="0 0 312 24">
<rect x="4.5" y="4.5" width="15" height="14" fill="#f3f3f3" stroke="#999"/><circle cx="12" cy="11" r="5" fill="#eaf6fc" stroke="#2a83bf" stroke-width="1.3"/><path d="M15.5 14.5l4 4" stroke="#777" stroke-width="2"/>
<circle cx="35" cy="10" r="6" fill="#fff" stroke="#2a83bf" stroke-width="1.4"/><path d="M32 10h6M35 7v6" stroke="#1d6a98" stroke-width="1.6"/><path d="M39.5 14.5l4 4.5" stroke="#777" stroke-width="2"/>
<circle cx="61" cy="10" r="6" fill="#fff" stroke="#2a83bf" stroke-width="1.4"/><path d="M58 10h6" stroke="#1d6a98" stroke-width="1.6"/><path d="M65.5 14.5l4 4.5" stroke="#777" stroke-width="2"/>
<rect x="82.5" y="4.5" width="15" height="15" fill="#f3f3f3" stroke="#999"/><path d="M83 19 L97 5 L97 19Z" fill="#9fd6f2"/><path d="M84 18l12-11" stroke="#1d6a98" stroke-width="1.5"/>
<path d="M108 8l4-4h11v11l-4 4h-11z" fill="#fff" stroke="#1d6a98" stroke-width="1.4"/><path d="M108 8h11v11M119 8l4-4" fill="none" stroke="#1d6a98" stroke-width="1.4"/><path d="M108 4l4-0 M123 4v0" stroke="#7cc4ee"/><path d="M112 4h11v0" stroke="#9fd6f2"/><path d="M121 21l3-3v3z" fill="#333"/>
<path d="M136 9l5-5h9l4 5-4 9h-9z" fill="#dff1fb" stroke="#4aa8d8" stroke-width="1"/><path d="M147 6l-3 5h6z" fill="#3a9ad2"/><rect x="143" y="13" width="6" height="7" fill="#fff" stroke="#777" stroke-width=".8"/><path d="M152 21l3-3v3z" fill="#333"/>
<rect x="160" y="4" width="14" height="14" fill="#fafafa" stroke="#aaa"/><path d="M160 8h14M160 12h14M165 4v14" stroke="#bbb" stroke-width=".8"/><rect x="167" y="13" width="10" height="7" rx="1" fill="#444"/><circle cx="172" cy="16.5" r="2.3" fill="#ddd" stroke="#222"/>
<path d="M186 5l4 4M190 5l-4 4" stroke="#8a6a2e" stroke-width="1.3"/><path d="M196 4l-2 4M193 12l-2 4M190 19l-1 2M201 15h4M197 11v9h8" stroke="#8a6a2e" stroke-width="1.3" fill="none"/><path d="M210 21l3-3v3z" fill="#333"/>
<rect x="213" y="4" width="13" height="8" fill="#fff4dc" stroke="#999" stroke-width=".8"/><path d="M222 10v5h4" stroke="#333" fill="none" stroke-width="1.2"/><ellipse cx="222" cy="18" rx="4" ry="2.5" fill="none" stroke="#333" stroke-width="1.2"/><circle cx="222" cy="18" r="1.1" fill="#333"/>
<path d="M238 6l4-2h9l4 2v11l-4 2h-9l-4-2z" fill="#ececec" stroke="#c9c9c9"/><path d="M242 6q4 2 9 0v12q-4-2-9 0z" fill="#dcdcdc"/>
<circle cx="266" cy="6" r="3" fill="#7ab87a"/><circle cx="276" cy="12" r="3" fill="#e87e7e"/><circle cx="266" cy="18" r="3" fill="#5a9bc8"/><path d="M266 6l4 6h6M270 12l-4 6" stroke="#444" fill="none" stroke-width="1.2"/>
<rect x="289" y="3" width="13" height="12" fill="#5cb85c"/><rect x="291" y="4" width="11" height="9" fill="#2a83bf"/><rect x="294" y="6" width="5" height="4" fill="#9fd6f2"/><path d="M295 16v5M298 17v4M301 18v3M291 16h4l6 5" stroke="#888" stroke-width=".9" fill="none"/><path d="M306 21l3-3v3z" fill="#333"/>
</svg>
<!-- DIALOG -->
<div id="dlg" class="a">
<div class="a" style="left:0px;top:0px;width:360px;height:28px;background:#dde0e2"></div>
<div class="dl" style="left:139px;top:9px;font-size:12px;color:#2e2e2e">Play Simulation</div>
<svg class="a" style="left:340px;top:9px" width="11" height="11" viewBox="0 0 11 11"><path d="M1.5 1.5l8 8M9.5 1.5l-8 8" stroke="#555" stroke-width="1.8"/></svg>
<div class="a" style="left:0px;top:28px;width:360px;height:30px;background:#eff0f2"></div>
<div class="dl" style="left:8px;top:40px;font-size:12px">File</div>
<div class="dl" style="left:44px;top:40px;font-size:12px">View</div>
<div class="a" style="left:0px;top:58px;width:360px;height:25px;background:#c6c9cc"></div>
<div class="a" style="left:8px;top:68px;border-left:6px solid transparent;border-right:6px solid transparent;border-top:6px solid #1e1e1e"></div>
<div class="dl" style="left:29px;top:66px;font-size:11.5px;color:#2e2e2e">CL Data</div>
<div class="a" style="left:1px;top:86px;width:358px;height:379px;background:#fff;border:1px solid #c9cbcd"></div>
<div class="a" style="left:2px;top:87px;width:356px;height:21px;background:#fbfbfb;border-bottom:1px solid #dcdcdc"></div>
<div class="a" style="left:71px;top:87px;width:1px;height:20px;background:#d9d9d9"></div>
<div class="a" style="left:2px;top:278px;width:341px;height:17px;background:#b3e1f9"></div>
<div class="dl" style="left:7px;top:111px;font-size:11px">53804</div>
<div class="dl" style="left:77px;top:111px;width:266px;overflow:hidden;font-size:11px">GOTO / -17.5861021855, -2.4085044754, 177.1969726</div>
<div class="dl" style="left:77px;top:128px;font-size:11px">-0.9907515660, -0.1356883723, 0.0000000000</div>
<div class="dl" style="left:7px;top:145px;font-size:11px">53805</div>
<div class="dl" style="left:77px;top:145px;width:266px;overflow:hidden;font-size:11px">GOTO / -17.7363243745, 0.7033360290, 177.1868194</div>
<div class="dl" style="left:77px;top:162px;font-size:11px">-0.9992146619, 0.0396239749, 0.0000000000</div>
<div class="dl" style="left:7px;top:179px;font-size:11px">53806</div>
<div class="dl" style="left:77px;top:179px;width:266px;overflow:hidden;font-size:11px">GOTO / -17.3401605906, 3.7935095335, 177.1766662</div>
<div class="dl" style="left:77px;top:196px;font-size:11px">-0.9768959079, 0.2137156643, 0.0000000000</div>
<div class="dl" style="left:7px;top:213px;font-size:11px">53807</div>
<div class="dl" style="left:77px;top:213px;width:266px;overflow:hidden;font-size:11px">GOTO / -16.4098153950, 6.7668192372, 177.1665161</div>
<div class="dl" style="left:77px;top:230px;font-size:11px">-0.9244828746, 0.3812235756, 0.0000000000</div>
<div class="dl" style="left:7px;top:247px;font-size:11px">53808</div>
<div class="dl" style="left:77px;top:247px;width:266px;overflow:hidden;font-size:11px">GOTO / -14.9739489929, 9.5316701289, 177.1563659</div>
<div class="dl" style="left:77px;top:264px;font-size:11px">-0.8435901974, 0.5369875034, 0.0000000000</div>
<div class="dl" style="left:7px;top:281px;font-size:11px">53809</div>
<div class="dl" style="left:77px;top:281px;width:266px;overflow:hidden;font-size:11px">GOTO / -13.0767947226, 12.0028881387, 177.1462158</div>
<div class="dl" style="left:77px;top:298px;font-size:11px">-0.7367098584, 0.6762089800, 0.0000000000</div>
<div class="dl" style="left:7px;top:315px;font-size:11px">53810</div>
<div class="dl" style="left:77px;top:315px;width:266px;overflow:hidden;font-size:11px">GOTO / -10.7767963687, 14.1043448595, 177.1360656</div>
<div class="dl" style="left:77px;top:332px;font-size:11px">-0.6071344159, 0.7945991448, 0.0000000000</div>
<div class="dl" style="left:7px;top:349px;font-size:11px">53811</div>
<div class="dl" style="left:77px;top:349px;width:266px;overflow:hidden;font-size:11px">GOTO / -8.1448077411, 15.7713027600, 177.1259155</div>
<div class="dl" style="left:77px;top:366px;font-size:11px">-0.4588555747, 0.8885108675, 0.0000000000</div>
<div class="dl" style="left:7px;top:383px;font-size:11px">53812</div>
<div class="dl" style="left:77px;top:383px;width:266px;overflow:hidden;font-size:11px">GOTO / -7.9614526448, 15.8646511362, 178.4245605</div>
<div class="dl" style="left:77px;top:400px;font-size:11px">-0.4485258639, 0.8937698526, 0.0000000000</div>
<div class="dl" style="left:7px;top:417px;font-size:11px">53813</div>
<div class="dl" style="left:77px;top:417px;width:266px;overflow:hidden;font-size:11px">GOTO / -7.6940417330, 15.9960496904, 179.5959320</div>
<div class="dl" style="left:77px;top:434px;font-size:11px">-0.4334606848, 0.9011724778, 0.0000000000</div>
<div class="a" style="left:343px;top:108px;width:15px;height:340px;background:#dfe0e2"></div>
<div class="a" style="left:344px;top:109px;width:13px;height:14px;background:#f4f4f4;border:1px solid #e6e6e6"></div>
<div class="a" style="left:347px;top:113px;border-left:4px solid transparent;border-right:4px solid transparent;border-bottom:4px solid #a5a5a5"></div>
<div class="a" style="left:344px;top:411px;width:13px;height:21px;background:#f7f7f7;border:1px solid #e3e3e3"></div>
<div class="a" style="left:344px;top:434px;width:13px;height:14px;background:#f4f4f4;border:1px solid #e6e6e6"></div>
<div class="a" style="left:347px;top:439px;border-left:4px solid transparent;border-right:4px solid transparent;border-top:4px solid #a5a5a5"></div>
<div class="a" style="left:2px;top:448px;width:341px;height:15px;background:#dfe0e2"></div>
<div class="a" style="left:3px;top:449px;width:14px;height:13px;background:#f4f4f4;border:1px solid #e6e6e6"></div>
<div class="a" style="left:7px;top:451px;border-top:4px solid transparent;border-bottom:4px solid transparent;border-right:4px solid #a5a5a5"></div>
<div class="a" style="left:18px;top:449px;width:232px;height:13px;background:#f7f7f7;border:1px solid #e3e3e3"></div>
<div class="a" style="left:329px;top:449px;width:14px;height:13px;background:#f4f4f4;border:1px solid #e6e6e6"></div>
<div class="a" style="left:334px;top:451px;border-top:4px solid transparent;border-bottom:4px solid transparent;border-left:4px solid #a5a5a5"></div>
<div class="a" style="left:343px;top:448px;width:15px;height:15px;background:#fbfbfb"></div>
<div class="sh" style="left:0px;top:465px;width:360px"><div class="tri"></div><span>Sequence List</span></div>
<div class="sh" style="left:0px;top:491px;width:360px"><div class="tri"></div><span>Tool List</span></div>
<div class="sh" style="left:0px;top:517px;width:360px"><div class="tri"></div><span>NC Information</span></div>
<div class="sh" style="left:0px;top:543px;width:360px"><div class="tri"></div><span>Collision Report</span></div>
<div class="sh" style="left:0px;top:569px;width:360px"><div class="tri"></div><span>Gouge Report</span></div>
<div class="a" style="left:4px;top:599px;width:104px;height:23px;background:#f7f7f7;border:1px solid #c8cacc"></div>
<svg class="a" style="left:48px;top:603px" width="14" height="14" viewBox="0 0 14 14"><path d="M3.2 5.5 A4.5 4.5 0 1 0 7 2.5" fill="none" stroke="#555" stroke-width="1.3"/><path d="M7 0.5 L9.5 2.5 L7 4.5Z" fill="#555"/></svg>
<div class="a" style="left:110px;top:599px;width:141px;height:23px;background:#e6e7e9;border:1px solid #dcdde0"></div>
<div class="a" style="left:174px;top:604px;width:11px;height:11px;background:#8e8e8e"></div>
<div class="a" style="left:253px;top:599px;width:103px;height:23px;background:#a8dcfa;border:1px solid #78c6f0"></div>
<div class="a" style="left:299px;top:604px;border-top:6px solid transparent;border-bottom:6px solid transparent;border-left:9px solid #222"></div>
<div class="a" style="left:4px;top:625px;width:104px;height:24px;background:#f7f7f7;border:1px solid #c8cacc"></div>
<div class="a" style="left:110px;top:625px;width:70px;height:24px;background:#f7f7f7;border:1px solid #c8cacc"></div>
<div class="a" style="left:182px;top:625px;width:69px;height:24px;background:#f7f7f7;border:1px solid #c8cacc"></div>
<div class="a" style="left:253px;top:625px;width:103px;height:24px;background:#f7f7f7;border:1px solid #c8cacc"></div>
<svg class="a" style="left:42px;top:629px" width="300" height="14" viewBox="0 0 300 14">
<rect x="6" y="2" width="1.3" height="10" fill="#555"/><path d="M14 2 L8 7 L14 12Z M20 2 L14 7 L20 12Z" fill="#555"/>
<path d="M102 2 L96 7 L102 12Z M108 2 L102 7 L108 12Z" fill="#555"/>
<path d="M167 2 L173 7 L167 12Z M173 2 L179 7 L173 12Z" fill="#555"/>
<path d="M254 2 L260 7 L254 12Z M260 2 L266 7 L260 12Z" fill="#555"/><rect x="267" y="2" width="1.3" height="10" fill="#555"/>
</svg>
<div class="a" style="left:0px;top:653px;width:360px;height:1px;background:#d6d8da"></div>
<div class="dl" style="left:4px;top:664px;font-size:11.3px">Display Speed</div>
<div class="a" style="left:4px;top:693px;width:350px;height:2px;background:#cfd1d3;border-radius:1px"></div>
<div class="a" style="left:65px;top:685px;width:9px;height:20px;background:#f3f3f3;border:1px solid #8f9295;border-radius:2px"></div>
<div class="dl" style="left:42px;top:713px;font-size:11.3px">Slow</div>
<div class="dl" style="left:296px;top:713px;font-size:11.3px">Fast</div>
<div class="a" style="left:0px;top:729px;width:360px;height:1px;background:#d6d8da"></div>
<div class="a" style="left:155px;top:738px;width:49px;height:23px;background:#f8f8f8;border:1px solid #c3c5c8"></div>
<div class="dl" style="left:165px;top:745px;font-size:11.5px;color:#2e2e2e">Close</div>
</div>
</body></html>
